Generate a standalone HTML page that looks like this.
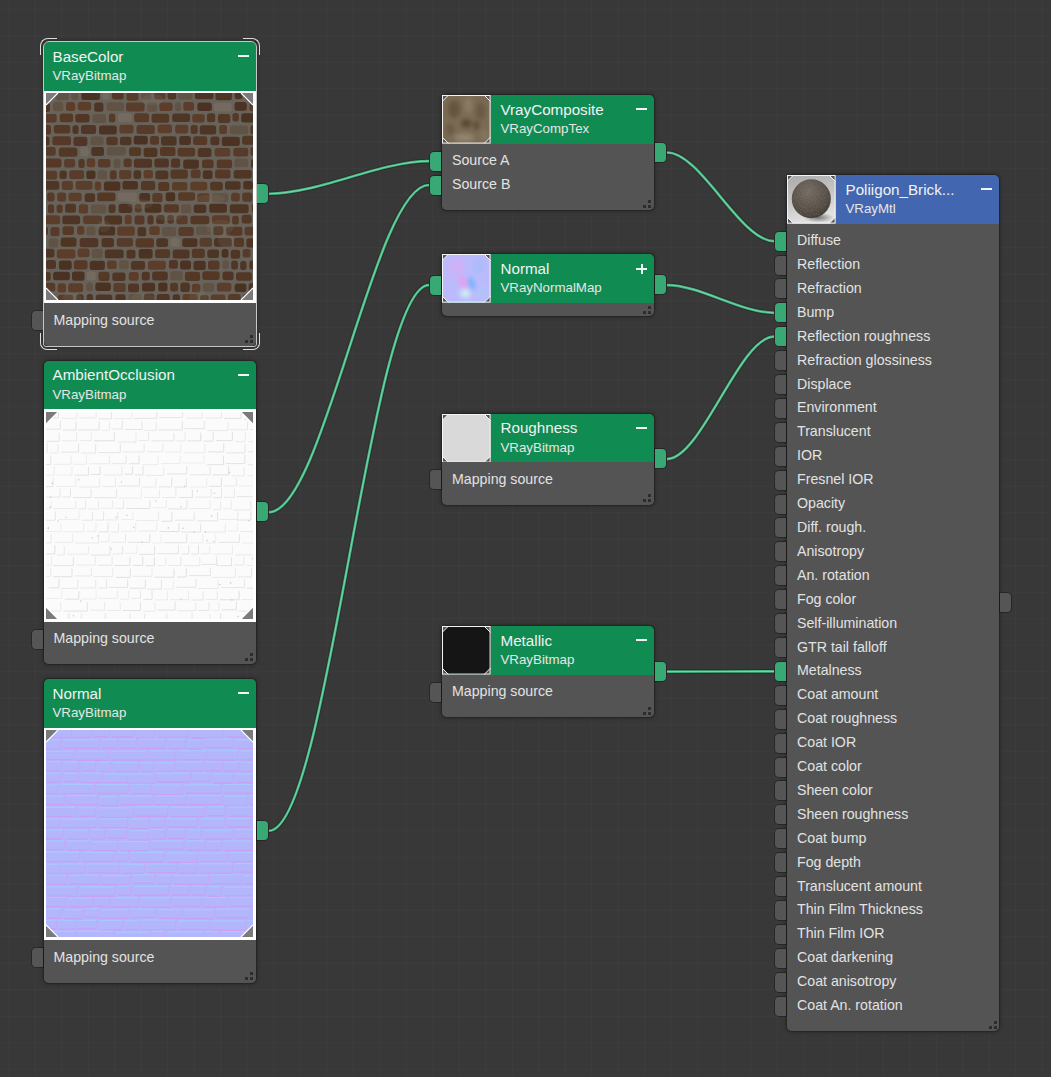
<!DOCTYPE html><html><head><meta charset="utf-8"><style>
*{box-sizing:border-box}
html,body{margin:0;padding:0}
body{width:1051px;height:1077px;overflow:hidden;position:relative;background-color:#383838;
background-image:linear-gradient(90deg,rgba(255,255,255,0.018) 1px,transparent 1px),linear-gradient(0deg,rgba(255,255,255,0.018) 1px,transparent 1px);
background-size:26.5px 26.5px;background-position:8.3px 9.8px;
font-family:"Liberation Sans",sans-serif;}
svg.wires{position:absolute;left:0;top:0}
.node{position:absolute;border-radius:5px 5px 5px 5px;background:#545454;box-shadow:0 0 1px 1px rgba(0,0,0,0.22),0 0 4px 1px rgba(0,0,0,0.28)}
.hdr{position:absolute;left:0;top:0;width:100%;border-radius:5px 5px 0 0}
.body{position:absolute;left:0;width:100%;background:#545454;border-radius:0 0 5px 5px}
.frame{position:absolute;left:0;width:100%;background:#fff}
.img{position:absolute;display:block}
.ttl{position:absolute;font-size:15.2px;line-height:17px;color:#f2f2f2;white-space:nowrap}
.sub{position:absolute;font-size:13.3px;line-height:15px;color:#e6e6e6;white-space:nowrap}
.lbl{position:absolute;font-size:14.2px;line-height:16px;color:#e2e2e2;white-space:nowrap}
.sk{position:absolute;width:11.2px;height:19px;background:#555555;box-shadow:0 0 0 1px rgba(0,0,0,0.3)}
.skl{border-radius:4px 0 0 4px}
.skr{border-radius:0 4px 4px 0}
.sk.on{background:#38a874}
.dot{position:absolute;width:3px;height:3px;border-radius:0.5px;background:#2c2c2c}
.mi{position:absolute;width:11px;height:2px;background:#f4f4f4}
.br{position:absolute;width:17px;height:17px;border:0 solid #dcdcdc}
</style></head><body><svg class="wires" width="1051" height="1077" viewBox="0 0 1051 1077"><path d="M269 193.75C317.7 193.75 380.3 161.1 429 161.1" fill="none" stroke="rgba(0,0,0,0.22)" stroke-width="4.6"/><path d="M269 512.25C323.5 512.25 374.5 185.006 429 185.006" fill="none" stroke="rgba(0,0,0,0.22)" stroke-width="4.6"/><path d="M269 830.75C327.9 830.75 370.1 285.05 429 285.05" fill="none" stroke="rgba(0,0,0,0.22)" stroke-width="4.6"/><path d="M667 152.503C700.9 152.503 740.1 241.1 774 241.1" fill="none" stroke="rgba(0,0,0,0.22)" stroke-width="4.6"/><path d="M667 285.05C699.7 285.05 741.3 312.818 774 312.818" fill="none" stroke="rgba(0,0,0,0.22)" stroke-width="4.6"/><path d="M667 459.05C701.5 459.05 739.5 336.724 774 336.724" fill="none" stroke="rgba(0,0,0,0.22)" stroke-width="4.6"/><path d="M667 671.55C699.1 671.55 741.9 671.408 774 671.408" fill="none" stroke="rgba(0,0,0,0.22)" stroke-width="4.6"/><path d="M269 193.75C317.7 193.75 380.3 161.1 429 161.1" fill="none" stroke="#3fb07c" stroke-width="2.7"/><path d="M269 512.25C323.5 512.25 374.5 185.006 429 185.006" fill="none" stroke="#3fb07c" stroke-width="2.7"/><path d="M269 830.75C327.9 830.75 370.1 285.05 429 285.05" fill="none" stroke="#3fb07c" stroke-width="2.7"/><path d="M667 152.503C700.9 152.503 740.1 241.1 774 241.1" fill="none" stroke="#3fb07c" stroke-width="2.7"/><path d="M667 285.05C699.7 285.05 741.3 312.818 774 312.818" fill="none" stroke="#3fb07c" stroke-width="2.7"/><path d="M667 459.05C701.5 459.05 739.5 336.724 774 336.724" fill="none" stroke="#3fb07c" stroke-width="2.7"/><path d="M667 671.55C699.1 671.55 741.9 671.408 774 671.408" fill="none" stroke="#3fb07c" stroke-width="2.7"/><path d="M269 193.75C317.7 193.75 380.3 161.1 429 161.1" fill="none" stroke="#74d4a6" stroke-width="1.1"/><path d="M269 512.25C323.5 512.25 374.5 185.006 429 185.006" fill="none" stroke="#74d4a6" stroke-width="1.1"/><path d="M269 830.75C327.9 830.75 370.1 285.05 429 285.05" fill="none" stroke="#74d4a6" stroke-width="1.1"/><path d="M667 152.503C700.9 152.503 740.1 241.1 774 241.1" fill="none" stroke="#74d4a6" stroke-width="1.1"/><path d="M667 285.05C699.7 285.05 741.3 312.818 774 312.818" fill="none" stroke="#74d4a6" stroke-width="1.1"/><path d="M667 459.05C701.5 459.05 739.5 336.724 774 336.724" fill="none" stroke="#74d4a6" stroke-width="1.1"/><path d="M667 671.55C699.1 671.55 741.9 671.408 774 671.408" fill="none" stroke="#74d4a6" stroke-width="1.1"/></svg><div class="node" style="left:44px;top:42px;width:212px;height:303.5px"><div class="hdr" style="height:48.5px;background:#108c52"></div><div class="ttl" style="left:8.5px;top:5.600000000000001px">BaseColor</div><div class="sub" style="left:8.5px;top:26.400000000000002px">VRayBitmap</div><div class="frame" style="top:48.5px;height:212.5px"></div><svg class="img" style="left:2px;top:51.0px" width="207" height="207" viewBox="0 0 207 207"><defs><filter id="f_base" x="0" y="0" width="100%" height="100%"><feGaussianBlur stdDeviation="0.55"/></filter></defs><rect width="207" height="207" fill="#68635a"/><g filter="url(#f_base)"><rect x="-5.4" y="-2.0" width="13.3" height="8.6" rx="2.5" fill="#553928"/><rect x="10.1" y="-1.6" width="12.7" height="8.8" rx="2.5" fill="#615345"/><rect x="25.1" y="-1.8" width="7.2" height="8.7" rx="2.5" fill="#615345"/><rect x="35.4" y="-1.9" width="18.5" height="8.8" rx="2.5" fill="#4a3223"/><rect x="56.6" y="-2.3" width="6.8" height="9.1" rx="2.5" fill="#746b5e"/><rect x="66.0" y="-2.0" width="11.7" height="8.6" rx="2.5" fill="#533827"/><rect x="80.5" y="-1.4" width="11.9" height="9.1" rx="2.5" fill="#593c2a"/><rect x="95.3" y="-2.3" width="10.1" height="9.1" rx="2.5" fill="#615345"/><rect x="108.3" y="-2.1" width="11.2" height="8.6" rx="2.5" fill="#593c2a"/><rect x="121.5" y="-2.0" width="8.7" height="8.6" rx="2.5" fill="#513626"/><rect x="132.3" y="-2.3" width="14.2" height="8.7" rx="2.5" fill="#615345"/><rect x="148.9" y="-2.5" width="18.5" height="8.7" rx="2.5" fill="#4b3324"/><rect x="169.5" y="-1.9" width="16.4" height="9.2" rx="2.5" fill="#4d3424"/><rect x="188.7" y="-2.5" width="7.7" height="8.8" rx="2.5" fill="#4d3425"/><rect x="198.8" y="-2.2" width="18.6" height="8.7" rx="2.5" fill="#4d3425"/><rect x="-10.3" y="9.9" width="14.3" height="9.2" rx="2.5" fill="#4e3525"/><rect x="7.0" y="8.8" width="10.3" height="9.1" rx="2.5" fill="#615345"/><rect x="20.0" y="9.1" width="9.2" height="8.8" rx="2.5" fill="#5c3e2b"/><rect x="31.7" y="8.9" width="13.5" height="8.6" rx="2.5" fill="#5b3d2b"/><rect x="48.2" y="9.6" width="9.2" height="9.1" rx="2.5" fill="#4d3425"/><rect x="60.6" y="9.2" width="17.5" height="8.8" rx="2.5" fill="#615345"/><rect x="80.1" y="9.5" width="18.5" height="9.1" rx="2.5" fill="#593c2a"/><rect x="101.3" y="9.6" width="9.8" height="9.2" rx="2.5" fill="#615345"/><rect x="113.4" y="9.4" width="13.3" height="8.6" rx="2.5" fill="#5b3d2b"/><rect x="128.9" y="9.2" width="6.2" height="9.1" rx="2.5" fill="#615345"/><rect x="137.3" y="8.9" width="10.8" height="8.8" rx="2.5" fill="#5a3d2b"/><rect x="151.3" y="9.4" width="14.5" height="8.7" rx="2.5" fill="#4a3223"/><rect x="167.9" y="9.9" width="17.8" height="8.7" rx="2.5" fill="#746b5e"/><rect x="188.5" y="9.1" width="12.3" height="8.7" rx="2.5" fill="#4b3223"/><rect x="203.4" y="9.6" width="15.6" height="8.6" rx="2.5" fill="#583c2a"/><rect x="-4.2" y="21.0" width="14.9" height="8.6" rx="2.5" fill="#583b2a"/><rect x="13.7" y="20.5" width="13.4" height="8.8" rx="2.5" fill="#553928"/><rect x="29.3" y="21.1" width="14.3" height="8.5" rx="2.5" fill="#513626"/><rect x="46.5" y="21.0" width="13.6" height="8.9" rx="2.5" fill="#615345"/><rect x="62.9" y="20.6" width="6.4" height="8.8" rx="2.5" fill="#573a29"/><rect x="71.9" y="20.3" width="14.0" height="8.6" rx="2.5" fill="#746b5e"/><rect x="88.2" y="20.2" width="14.8" height="9.1" rx="2.5" fill="#563a29"/><rect x="105.6" y="20.8" width="17.6" height="9.0" rx="2.5" fill="#523727"/><rect x="126.2" y="20.5" width="17.9" height="8.6" rx="2.5" fill="#4f3526"/><rect x="146.2" y="21.0" width="12.5" height="8.6" rx="2.5" fill="#5b3e2b"/><rect x="161.0" y="20.3" width="8.2" height="8.9" rx="2.5" fill="#513726"/><rect x="171.9" y="21.0" width="12.4" height="9.0" rx="2.5" fill="#523727"/><rect x="186.4" y="20.0" width="6.4" height="8.6" rx="2.5" fill="#543928"/><rect x="195.2" y="20.2" width="16.3" height="9.3" rx="2.5" fill="#4a3223"/><rect x="-2.8" y="32.1" width="7.8" height="9.3" rx="2.5" fill="#553928"/><rect x="7.8" y="32.1" width="16.5" height="8.5" rx="2.5" fill="#523727"/><rect x="26.5" y="32.2" width="6.1" height="8.9" rx="2.5" fill="#4f3525"/><rect x="35.0" y="32.0" width="15.1" height="8.9" rx="2.5" fill="#513626"/><rect x="53.0" y="32.4" width="17.8" height="9.2" rx="2.5" fill="#4c3324"/><rect x="73.4" y="31.8" width="14.1" height="8.6" rx="2.5" fill="#5a3d2b"/><rect x="90.5" y="32.1" width="18.3" height="8.9" rx="2.5" fill="#573b29"/><rect x="111.7" y="31.6" width="14.3" height="8.7" rx="2.5" fill="#5c3e2c"/><rect x="129.2" y="31.7" width="13.0" height="8.7" rx="2.5" fill="#5a3c2a"/><rect x="144.6" y="32.0" width="7.1" height="8.9" rx="2.5" fill="#533827"/><rect x="153.7" y="32.3" width="16.5" height="9.2" rx="2.5" fill="#503626"/><rect x="173.2" y="31.9" width="7.8" height="9.2" rx="2.5" fill="#593c2a"/><rect x="183.9" y="32.4" width="18.3" height="8.9" rx="2.5" fill="#615345"/><rect x="204.4" y="32.2" width="12.8" height="9.1" rx="2.5" fill="#533827"/><rect x="-6.7" y="43.6" width="10.1" height="9.0" rx="2.5" fill="#4d3425"/><rect x="6.4" y="43.3" width="18.6" height="8.9" rx="2.5" fill="#543828"/><rect x="27.5" y="43.8" width="13.9" height="9.3" rx="2.5" fill="#513626"/><rect x="44.4" y="43.4" width="13.3" height="8.9" rx="2.5" fill="#615345"/><rect x="60.3" y="43.7" width="11.4" height="8.5" rx="2.5" fill="#523727"/><rect x="73.9" y="43.7" width="11.6" height="8.6" rx="2.5" fill="#4f3526"/><rect x="87.7" y="42.8" width="14.0" height="8.6" rx="2.5" fill="#4a3223"/><rect x="104.0" y="43.0" width="9.0" height="8.8" rx="2.5" fill="#553928"/><rect x="115.1" y="43.2" width="15.5" height="9.2" rx="2.5" fill="#4d3425"/><rect x="133.2" y="43.1" width="11.7" height="9.0" rx="2.5" fill="#4c3324"/><rect x="147.1" y="43.2" width="14.2" height="8.8" rx="2.5" fill="#553928"/><rect x="164.4" y="43.6" width="9.0" height="8.7" rx="2.5" fill="#4f3526"/><rect x="175.8" y="43.8" width="18.0" height="9.1" rx="2.5" fill="#4c3324"/><rect x="196.1" y="42.7" width="15.4" height="9.1" rx="2.5" fill="#513727"/><rect x="-1.5" y="53.9" width="11.2" height="8.8" rx="2.5" fill="#563a29"/><rect x="12.8" y="54.5" width="18.6" height="9.2" rx="2.5" fill="#533827"/><rect x="34.2" y="54.0" width="8.5" height="9.2" rx="2.5" fill="#746b5e"/><rect x="45.3" y="54.1" width="12.7" height="8.8" rx="2.5" fill="#4d3425"/><rect x="61.0" y="54.0" width="18.9" height="8.6" rx="2.5" fill="#615345"/><rect x="83.1" y="54.3" width="12.0" height="8.7" rx="2.5" fill="#533827"/><rect x="97.6" y="54.7" width="13.8" height="9.3" rx="2.5" fill="#4d3424"/><rect x="113.9" y="54.1" width="15.6" height="9.0" rx="2.5" fill="#533827"/><rect x="131.6" y="54.7" width="17.6" height="8.7" rx="2.5" fill="#553928"/><rect x="151.7" y="55.1" width="13.8" height="8.9" rx="2.5" fill="#4e3525"/><rect x="168.6" y="54.9" width="15.7" height="8.7" rx="2.5" fill="#5a3d2b"/><rect x="187.3" y="54.8" width="15.0" height="8.7" rx="2.5" fill="#573b29"/><rect x="204.4" y="53.9" width="10.4" height="8.9" rx="2.5" fill="#563a29"/><rect x="-2.8" y="65.6" width="18.3" height="8.8" rx="2.5" fill="#543928"/><rect x="18.1" y="66.0" width="11.1" height="8.5" rx="2.5" fill="#583b2a"/><rect x="32.4" y="66.1" width="6.3" height="8.8" rx="2.5" fill="#513726"/><rect x="40.7" y="65.3" width="8.5" height="9.0" rx="2.5" fill="#5b3d2b"/><rect x="51.9" y="65.9" width="12.6" height="8.5" rx="2.5" fill="#563a29"/><rect x="67.5" y="66.1" width="7.0" height="8.8" rx="2.5" fill="#615345"/><rect x="77.6" y="65.4" width="8.1" height="8.9" rx="2.5" fill="#553928"/><rect x="87.8" y="65.8" width="18.3" height="9.0" rx="2.5" fill="#503626"/><rect x="108.4" y="65.5" width="14.5" height="8.9" rx="2.5" fill="#4f3525"/><rect x="124.9" y="65.4" width="9.2" height="9.3" rx="2.5" fill="#513626"/><rect x="137.2" y="66.4" width="15.7" height="9.3" rx="2.5" fill="#4b3223"/><rect x="156.0" y="66.4" width="11.6" height="8.9" rx="2.5" fill="#533827"/><rect x="170.7" y="66.4" width="15.4" height="8.9" rx="2.5" fill="#553928"/><rect x="188.2" y="65.4" width="14.1" height="8.9" rx="2.5" fill="#615345"/><rect x="205.0" y="66.0" width="7.6" height="8.9" rx="2.5" fill="#4e3525"/><rect x="-5.0" y="77.7" width="16.1" height="8.9" rx="2.5" fill="#573b29"/><rect x="13.4" y="77.4" width="7.5" height="8.6" rx="2.5" fill="#503626"/><rect x="23.2" y="77.2" width="14.9" height="8.8" rx="2.5" fill="#583b2a"/><rect x="40.3" y="77.6" width="9.2" height="8.5" rx="2.5" fill="#4a3223"/><rect x="51.6" y="77.2" width="9.5" height="9.0" rx="2.5" fill="#615345"/><rect x="63.8" y="77.3" width="6.9" height="9.2" rx="2.5" fill="#553928"/><rect x="73.2" y="76.9" width="12.2" height="9.1" rx="2.5" fill="#593c2a"/><rect x="87.5" y="77.2" width="7.6" height="8.7" rx="2.5" fill="#4d3425"/><rect x="97.6" y="76.9" width="9.4" height="8.7" rx="2.5" fill="#5c3e2c"/><rect x="109.3" y="77.6" width="13.1" height="8.7" rx="2.5" fill="#503626"/><rect x="124.5" y="76.6" width="17.4" height="9.2" rx="2.5" fill="#533827"/><rect x="144.7" y="76.6" width="9.9" height="8.7" rx="2.5" fill="#563a29"/><rect x="156.7" y="77.3" width="9.9" height="8.7" rx="2.5" fill="#4c3324"/><rect x="169.1" y="76.6" width="15.4" height="9.0" rx="2.5" fill="#543928"/><rect x="187.6" y="77.0" width="18.2" height="8.6" rx="2.5" fill="#4f3526"/><rect x="-4.8" y="88.1" width="18.2" height="8.6" rx="2.5" fill="#503626"/><rect x="15.8" y="88.0" width="11.1" height="9.0" rx="2.5" fill="#593c2a"/><rect x="29.6" y="88.0" width="16.9" height="8.8" rx="2.5" fill="#5a3d2b"/><rect x="48.8" y="88.5" width="6.3" height="8.9" rx="2.5" fill="#5c3e2b"/><rect x="57.9" y="88.5" width="16.5" height="9.2" rx="2.5" fill="#4b3224"/><rect x="76.4" y="87.9" width="15.6" height="8.6" rx="2.5" fill="#4c3324"/><rect x="94.9" y="88.1" width="14.4" height="9.1" rx="2.5" fill="#533827"/><rect x="112.2" y="89.0" width="11.1" height="9.0" rx="2.5" fill="#533827"/><rect x="126.0" y="88.9" width="15.4" height="8.7" rx="2.5" fill="#593c2a"/><rect x="144.2" y="88.8" width="17.1" height="8.7" rx="2.5" fill="#5c3e2b"/><rect x="164.1" y="88.8" width="12.8" height="8.7" rx="2.5" fill="#513727"/><rect x="179.0" y="88.3" width="15.6" height="8.5" rx="2.5" fill="#4d3425"/><rect x="197.2" y="87.9" width="9.8" height="8.5" rx="2.5" fill="#4c3324"/><rect x="-9.3" y="99.7" width="8.3" height="9.3" rx="2.5" fill="#5b3d2b"/><rect x="1.1" y="99.4" width="7.4" height="9.2" rx="2.5" fill="#573b29"/><rect x="11.2" y="99.4" width="8.9" height="9.2" rx="2.5" fill="#583b2a"/><rect x="22.5" y="99.7" width="13.1" height="8.6" rx="2.5" fill="#5a3d2b"/><rect x="38.7" y="100.2" width="10.4" height="8.9" rx="2.5" fill="#4e3425"/><rect x="51.2" y="99.6" width="18.3" height="8.7" rx="2.5" fill="#533827"/><rect x="71.9" y="99.4" width="18.9" height="8.8" rx="2.5" fill="#746b5e"/><rect x="93.3" y="100.0" width="10.8" height="8.7" rx="2.5" fill="#4c3324"/><rect x="106.3" y="100.1" width="10.2" height="9.1" rx="2.5" fill="#563a29"/><rect x="119.7" y="99.3" width="9.5" height="8.9" rx="2.5" fill="#493123"/><rect x="132.1" y="99.2" width="17.0" height="8.6" rx="2.5" fill="#573b29"/><rect x="151.3" y="100.2" width="12.2" height="8.9" rx="2.5" fill="#5a3c2a"/><rect x="165.9" y="100.2" width="16.3" height="9.0" rx="2.5" fill="#615345"/><rect x="185.1" y="99.7" width="8.7" height="8.9" rx="2.5" fill="#593c2a"/><rect x="196.2" y="99.5" width="10.0" height="9.2" rx="2.5" fill="#573b29"/><rect x="-8.2" y="111.0" width="7.4" height="9.0" rx="2.5" fill="#593c2a"/><rect x="1.9" y="111.3" width="6.2" height="9.0" rx="2.5" fill="#543928"/><rect x="10.6" y="111.4" width="6.1" height="8.5" rx="2.5" fill="#553928"/><rect x="19.1" y="110.8" width="10.9" height="8.9" rx="2.5" fill="#513626"/><rect x="32.8" y="111.3" width="9.3" height="9.1" rx="2.5" fill="#5b3d2b"/><rect x="44.8" y="111.4" width="15.4" height="9.0" rx="2.5" fill="#615345"/><rect x="62.4" y="111.2" width="7.2" height="8.8" rx="2.5" fill="#513726"/><rect x="72.6" y="110.7" width="13.7" height="9.2" rx="2.5" fill="#4c3324"/><rect x="88.8" y="110.9" width="6.9" height="8.6" rx="2.5" fill="#563a29"/><rect x="98.7" y="110.8" width="16.7" height="9.0" rx="2.5" fill="#4a3223"/><rect x="117.8" y="111.3" width="15.1" height="8.5" rx="2.5" fill="#553928"/><rect x="135.0" y="111.2" width="10.3" height="9.0" rx="2.5" fill="#615345"/><rect x="147.7" y="111.4" width="12.6" height="8.7" rx="2.5" fill="#4c3324"/><rect x="163.2" y="110.8" width="17.7" height="8.9" rx="2.5" fill="#4c3324"/><rect x="183.8" y="111.3" width="18.8" height="8.9" rx="2.5" fill="#4d3425"/><rect x="205.8" y="110.5" width="14.2" height="9.1" rx="2.5" fill="#543928"/><rect x="-4.0" y="122.3" width="18.1" height="9.0" rx="2.5" fill="#5c3e2c"/><rect x="16.3" y="122.4" width="17.8" height="8.9" rx="2.5" fill="#4e3525"/><rect x="37.1" y="122.4" width="18.9" height="8.6" rx="2.5" fill="#593c2a"/><rect x="58.4" y="122.4" width="17.7" height="9.1" rx="2.5" fill="#4d3424"/><rect x="78.7" y="121.9" width="7.0" height="9.3" rx="2.5" fill="#5b3d2b"/><rect x="88.5" y="122.6" width="10.0" height="8.8" rx="2.5" fill="#553928"/><rect x="101.4" y="122.3" width="6.2" height="9.1" rx="2.5" fill="#513626"/><rect x="110.3" y="122.0" width="8.3" height="8.9" rx="2.5" fill="#503626"/><rect x="121.4" y="121.9" width="6.5" height="8.8" rx="2.5" fill="#553928"/><rect x="130.4" y="122.5" width="11.3" height="8.8" rx="2.5" fill="#583b2a"/><rect x="144.4" y="122.7" width="18.9" height="8.6" rx="2.5" fill="#523727"/><rect x="166.0" y="122.3" width="17.8" height="8.9" rx="2.5" fill="#5b3d2b"/><rect x="186.1" y="122.8" width="6.7" height="8.7" rx="2.5" fill="#553928"/><rect x="195.7" y="121.8" width="10.0" height="8.8" rx="2.5" fill="#523727"/><rect x="-4.8" y="133.6" width="6.7" height="8.7" rx="2.5" fill="#4f3526"/><rect x="4.4" y="134.1" width="9.1" height="9.2" rx="2.5" fill="#563a29"/><rect x="16.5" y="133.3" width="11.5" height="8.7" rx="2.5" fill="#543928"/><rect x="31.1" y="133.1" width="7.3" height="8.7" rx="2.5" fill="#5b3e2b"/><rect x="40.3" y="133.4" width="9.2" height="9.1" rx="2.5" fill="#615345"/><rect x="52.6" y="133.4" width="16.6" height="9.0" rx="2.5" fill="#4a3223"/><rect x="71.2" y="133.6" width="17.7" height="9.1" rx="2.5" fill="#5c3e2c"/><rect x="91.5" y="134.1" width="8.7" height="9.1" rx="2.5" fill="#4d3425"/><rect x="103.2" y="133.2" width="10.6" height="8.9" rx="2.5" fill="#5c3e2c"/><rect x="116.0" y="134.1" width="14.2" height="9.1" rx="2.5" fill="#615345"/><rect x="132.4" y="134.1" width="15.4" height="9.0" rx="2.5" fill="#573a29"/><rect x="150.0" y="133.5" width="15.0" height="8.5" rx="2.5" fill="#615345"/><rect x="167.3" y="133.2" width="10.0" height="8.7" rx="2.5" fill="#4e3425"/><rect x="180.1" y="133.8" width="16.3" height="9.0" rx="2.5" fill="#553928"/><rect x="198.6" y="133.8" width="9.9" height="8.6" rx="2.5" fill="#563a29"/><rect x="-11.8" y="144.9" width="11.7" height="8.9" rx="2.5" fill="#615345"/><rect x="2.6" y="145.3" width="9.7" height="9.1" rx="2.5" fill="#615345"/><rect x="14.7" y="144.6" width="15.8" height="9.1" rx="2.5" fill="#4d3424"/><rect x="33.6" y="144.9" width="18.8" height="9.3" rx="2.5" fill="#513626"/><rect x="55.5" y="145.0" width="12.5" height="9.2" rx="2.5" fill="#503626"/><rect x="70.8" y="144.9" width="16.2" height="8.9" rx="2.5" fill="#563a29"/><rect x="89.6" y="145.2" width="18.4" height="9.2" rx="2.5" fill="#553928"/><rect x="110.3" y="145.2" width="11.7" height="8.7" rx="2.5" fill="#4e3425"/><rect x="124.6" y="144.9" width="8.9" height="8.8" rx="2.5" fill="#746b5e"/><rect x="136.2" y="145.3" width="15.3" height="8.8" rx="2.5" fill="#4c3324"/><rect x="153.5" y="144.8" width="12.4" height="9.0" rx="2.5" fill="#593c2a"/><rect x="168.0" y="145.0" width="17.8" height="8.8" rx="2.5" fill="#4e3425"/><rect x="188.0" y="144.7" width="10.0" height="9.3" rx="2.5" fill="#533827"/><rect x="200.4" y="145.3" width="13.7" height="9.2" rx="2.5" fill="#4e3525"/><rect x="-8.3" y="155.7" width="16.8" height="8.7" rx="2.5" fill="#503626"/><rect x="10.8" y="156.2" width="18.6" height="9.3" rx="2.5" fill="#5c3e2c"/><rect x="31.6" y="155.6" width="11.9" height="8.7" rx="2.5" fill="#5a3d2b"/><rect x="45.7" y="156.1" width="11.1" height="9.1" rx="2.5" fill="#615345"/><rect x="58.8" y="156.5" width="18.9" height="8.7" rx="2.5" fill="#4e3525"/><rect x="80.4" y="156.7" width="9.1" height="8.9" rx="2.5" fill="#503626"/><rect x="92.7" y="156.1" width="13.9" height="9.3" rx="2.5" fill="#4b3223"/><rect x="109.1" y="156.3" width="15.0" height="8.6" rx="2.5" fill="#523727"/><rect x="126.6" y="156.5" width="17.0" height="9.0" rx="2.5" fill="#503626"/><rect x="145.8" y="155.8" width="13.1" height="9.2" rx="2.5" fill="#523727"/><rect x="161.3" y="156.4" width="11.8" height="8.5" rx="2.5" fill="#4d3425"/><rect x="175.6" y="156.0" width="6.9" height="8.7" rx="2.5" fill="#4a3223"/><rect x="184.7" y="156.7" width="9.4" height="9.0" rx="2.5" fill="#4f3525"/><rect x="196.6" y="156.0" width="8.0" height="8.6" rx="2.5" fill="#573b29"/><rect x="-0.2" y="167.0" width="10.2" height="9.0" rx="2.5" fill="#503626"/><rect x="12.9" y="167.4" width="12.8" height="9.3" rx="2.5" fill="#4a3223"/><rect x="27.8" y="167.3" width="13.7" height="9.3" rx="2.5" fill="#543828"/><rect x="43.7" y="167.8" width="15.2" height="9.1" rx="2.5" fill="#4c3324"/><rect x="61.1" y="167.4" width="9.6" height="8.7" rx="2.5" fill="#5a3c2b"/><rect x="73.0" y="167.2" width="9.8" height="9.0" rx="2.5" fill="#615345"/><rect x="84.9" y="167.9" width="14.2" height="8.8" rx="2.5" fill="#4f3525"/><rect x="101.9" y="167.7" width="17.9" height="9.1" rx="2.5" fill="#5c3e2b"/><rect x="122.9" y="167.0" width="9.0" height="8.8" rx="2.5" fill="#513626"/><rect x="134.0" y="167.5" width="11.0" height="9.0" rx="2.5" fill="#4c3324"/><rect x="147.5" y="167.7" width="12.2" height="9.2" rx="2.5" fill="#4b3324"/><rect x="162.0" y="167.6" width="11.5" height="9.2" rx="2.5" fill="#543828"/><rect x="176.4" y="167.3" width="6.3" height="9.0" rx="2.5" fill="#615345"/><rect x="185.2" y="167.6" width="6.7" height="8.9" rx="2.5" fill="#503626"/><rect x="194.2" y="168.0" width="6.3" height="9.0" rx="2.5" fill="#4e3525"/><rect x="203.3" y="167.6" width="8.4" height="8.9" rx="2.5" fill="#503626"/><rect x="-11.3" y="178.9" width="16.0" height="8.8" rx="2.5" fill="#513727"/><rect x="7.1" y="178.7" width="16.8" height="8.6" rx="2.5" fill="#4a3223"/><rect x="26.0" y="178.6" width="12.6" height="9.1" rx="2.5" fill="#4c3324"/><rect x="40.8" y="178.5" width="9.0" height="8.8" rx="2.5" fill="#746b5e"/><rect x="52.4" y="178.8" width="11.1" height="9.1" rx="2.5" fill="#543828"/><rect x="66.3" y="179.4" width="13.3" height="8.6" rx="2.5" fill="#503626"/><rect x="82.7" y="179.0" width="10.1" height="8.7" rx="2.5" fill="#5c3e2b"/><rect x="95.7" y="178.8" width="8.1" height="8.8" rx="2.5" fill="#503626"/><rect x="106.1" y="178.5" width="15.7" height="8.9" rx="2.5" fill="#503626"/><rect x="124.1" y="178.3" width="12.7" height="9.2" rx="2.5" fill="#615345"/><rect x="138.9" y="178.7" width="15.2" height="9.2" rx="2.5" fill="#533827"/><rect x="156.3" y="178.3" width="17.3" height="8.6" rx="2.5" fill="#533827"/><rect x="176.5" y="178.5" width="11.1" height="8.7" rx="2.5" fill="#503626"/><rect x="190.0" y="179.2" width="15.9" height="8.6" rx="2.5" fill="#513727"/><rect x="-7.5" y="189.7" width="16.8" height="8.7" rx="2.5" fill="#563a29"/><rect x="11.6" y="190.2" width="8.4" height="9.3" rx="2.5" fill="#5c3e2c"/><rect x="22.2" y="190.3" width="14.9" height="9.0" rx="2.5" fill="#5b3d2b"/><rect x="40.3" y="189.6" width="6.6" height="8.7" rx="2.5" fill="#615345"/><rect x="49.3" y="189.6" width="15.5" height="8.5" rx="2.5" fill="#4a3223"/><rect x="67.4" y="189.9" width="12.3" height="9.0" rx="2.5" fill="#593c2a"/><rect x="82.0" y="190.4" width="11.1" height="8.8" rx="2.5" fill="#513626"/><rect x="96.0" y="189.7" width="13.1" height="8.7" rx="2.5" fill="#4b3324"/><rect x="112.2" y="189.6" width="9.3" height="8.9" rx="2.5" fill="#4a3223"/><rect x="124.1" y="189.8" width="7.9" height="8.8" rx="2.5" fill="#533827"/><rect x="134.4" y="189.6" width="9.4" height="9.3" rx="2.5" fill="#4f3526"/><rect x="145.9" y="190.7" width="8.4" height="8.9" rx="2.5" fill="#5a3c2b"/><rect x="156.9" y="190.0" width="11.4" height="8.7" rx="2.5" fill="#615345"/><rect x="170.9" y="189.8" width="14.5" height="8.8" rx="2.5" fill="#5a3c2b"/><rect x="188.6" y="190.4" width="11.8" height="8.6" rx="2.5" fill="#4a3223"/><rect x="202.6" y="189.9" width="7.5" height="9.2" rx="2.5" fill="#4f3526"/><rect x="-0.1" y="200.8" width="8.7" height="8.5" rx="2.5" fill="#593c2a"/><rect x="11.6" y="201.8" width="15.6" height="9.0" rx="2.5" fill="#583b2a"/><rect x="30.3" y="201.3" width="7.3" height="8.5" rx="2.5" fill="#4e3525"/><rect x="40.7" y="201.1" width="6.3" height="8.8" rx="2.5" fill="#503626"/><rect x="49.8" y="201.6" width="16.5" height="9.0" rx="2.5" fill="#4f3525"/><rect x="69.4" y="201.2" width="10.2" height="9.2" rx="2.5" fill="#4d3425"/><rect x="82.5" y="201.0" width="13.1" height="8.8" rx="2.5" fill="#615345"/><rect x="97.8" y="200.8" width="10.6" height="9.0" rx="2.5" fill="#513726"/><rect x="110.7" y="201.0" width="13.0" height="8.5" rx="2.5" fill="#503526"/><rect x="126.6" y="201.3" width="7.4" height="8.5" rx="2.5" fill="#4e3425"/><rect x="136.5" y="201.1" width="15.2" height="9.2" rx="2.5" fill="#5b3d2b"/><rect x="154.1" y="202.0" width="8.4" height="9.0" rx="2.5" fill="#553928"/><rect x="164.9" y="201.5" width="14.4" height="9.1" rx="2.5" fill="#5a3c2a"/><rect x="182.0" y="200.9" width="12.6" height="8.8" rx="2.5" fill="#573a29"/><rect x="197.1" y="201.3" width="14.7" height="9.0" rx="2.5" fill="#553928"/><ellipse cx="106.7" cy="6.7" rx="11.0" ry="5.8" fill="#8a8476" opacity="0.15"/><ellipse cx="122.8" cy="123.1" rx="13.5" ry="4.6" fill="#8a8476" opacity="0.15"/><ellipse cx="97.0" cy="205.5" rx="11.9" ry="5.3" fill="#8a8476" opacity="0.15"/><ellipse cx="152.5" cy="204.8" rx="9.2" ry="7.5" fill="#8a8476" opacity="0.15"/><ellipse cx="26.2" cy="204.9" rx="9.9" ry="4.9" fill="#8a8476" opacity="0.15"/><ellipse cx="173.9" cy="134.4" rx="13.5" ry="7.3" fill="#8a8476" opacity="0.15"/><ellipse cx="165.1" cy="105.9" rx="13.9" ry="4.3" fill="#8a8476" opacity="0.15"/><ellipse cx="180.1" cy="147.3" rx="8.0" ry="7.2" fill="#8a8476" opacity="0.15"/><ellipse cx="94.0" cy="111.0" rx="12.9" ry="4.8" fill="#8a8476" opacity="0.15"/><ellipse cx="57.9" cy="133.2" rx="6.6" ry="6.2" fill="#8a8476" opacity="0.15"/></g><path d="M0 0H12L0 12Z" fill="#7a7a7a"/><path d="M207 0H195L207 12Z" fill="#7a7a7a"/><path d="M0 207H12L0 195Z" fill="#7a7a7a"/><path d="M207 207H195L207 195Z" fill="#7a7a7a"/><path d="M12 0L0 12M195 0L207 12M0 195L12 207M207 195L195 207" stroke="#fff" stroke-width="1.2"/></svg><div class="body" style="top:261.0px;height:42.5px"></div><div class="lbl" style="left:9.5px;top:269.5px">Mapping source</div></div><div class="mi" style="left:238px;top:55px"></div><div class="dot" style="left:250px;top:335px"></div><div class="dot" style="left:245px;top:340px"></div><div class="dot" style="left:250px;top:340px"></div><div class="sk skl" style="left:32px;top:311.0px"></div><div class="sk skr on" style="left:257px;top:183.95px"></div><div class="node" style="left:44px;top:360.5px;width:212px;height:303.5px"><div class="hdr" style="height:48.5px;background:#108c52"></div><div class="ttl" style="left:8.5px;top:5.600000000000001px">AmbientOcclusion</div><div class="sub" style="left:8.5px;top:26.400000000000002px">VRayBitmap</div><div class="frame" style="top:48.5px;height:212.5px"></div><svg class="img" style="left:2px;top:51.0px" width="207" height="207" viewBox="0 0 207 207"><defs><filter id="f_ao" x="0" y="0" width="100%" height="100%"><feGaussianBlur stdDeviation="0.45"/></filter></defs><rect width="207" height="207" fill="#fbfbfb"/><g filter="url(#f_ao)"><path d="M-5.7 5.9h18.2v-8.3" fill="none" stroke="#dedede" stroke-width="0.9"/><path d="M15.7 6.3h15.2v-8.3" fill="none" stroke="#ebebeb" stroke-width="0.9"/><path d="M33.6 5.9h16.5v-8.3" fill="none" stroke="#e5e5e5" stroke-width="0.9"/><path d="M52.5 6.9h12.8v-8.8" fill="none" stroke="#e1e1e1" stroke-width="0.9"/><path d="M67.4 6.6h18.7v-8.7" fill="none" stroke="#ebebeb" stroke-width="0.9"/><path d="M88.2 6.3h22.6v-8.1" fill="none" stroke="#e1e1e1" stroke-width="0.9"/><path d="M112.9 5.5h23.8v-8.0" fill="none" stroke="#e4e4e4" stroke-width="0.9"/><path d="M139.9 6.1h16.2v-8.0" fill="none" stroke="#e9e9e9" stroke-width="0.9"/><path d="M159.1 6.0h16.4v-8.5" fill="none" stroke="#e7e7e7" stroke-width="0.9"/><path d="M178.0 6.4h17.1v-8.5" fill="none" stroke="#dedede" stroke-width="0.9"/><path d="M197.9 7.2h8.4v-8.9" fill="none" stroke="#e2e2e2" stroke-width="0.9"/><path d="M-4.4 17.1h18.7v-8.3" fill="none" stroke="#e1e1e1" stroke-width="0.9"/><path d="M16.8 18.0h13.3v-8.4" fill="none" stroke="#e0e0e0" stroke-width="0.9"/><path d="M32.1 17.9h21.0v-8.6" fill="none" stroke="#e1e1e1" stroke-width="0.9"/><path d="M55.9 18.3h7.7v-8.9" fill="none" stroke="#eaeaea" stroke-width="0.9"/><path d="M66.3 17.0h10.0v-8.3" fill="none" stroke="#e2e2e2" stroke-width="0.9"/><path d="M78.9 17.5h17.2v-8.2" fill="none" stroke="#e3e3e3" stroke-width="0.9"/><path d="M98.4 18.4h11.8v-8.5" fill="none" stroke="#e5e5e5" stroke-width="0.9"/><path d="M112.5 17.9h23.8v-8.5" fill="none" stroke="#e0e0e0" stroke-width="0.9"/><path d="M138.5 16.7h19.7v-8.0" fill="none" stroke="#e2e2e2" stroke-width="0.9"/><path d="M161.4 18.5h20.6v-8.9" fill="none" stroke="#e6e6e6" stroke-width="0.9"/><path d="M184.0 17.8h17.5v-7.9" fill="none" stroke="#e6e6e6" stroke-width="0.9"/><path d="M203.7 17.5h22.8v-8.0" fill="none" stroke="#e2e2e2" stroke-width="0.9"/><path d="M-2.8 29.3h16.0v-8.5" fill="none" stroke="#e2e2e2" stroke-width="0.9"/><path d="M16.0 28.8h14.6v-8.2" fill="none" stroke="#e7e7e7" stroke-width="0.9"/><path d="M33.6 28.6h11.7v-8.0" fill="none" stroke="#e9e9e9" stroke-width="0.9"/><path d="M47.9 28.8h20.5v-8.2" fill="none" stroke="#dedede" stroke-width="0.9"/><path d="M71.2 30.0h18.8v-8.9" fill="none" stroke="#e4e4e4" stroke-width="0.9"/><path d="M92.2 28.6h10.4v-8.5" fill="none" stroke="#e7e7e7" stroke-width="0.9"/><path d="M105.3 28.9h22.6v-7.9" fill="none" stroke="#e4e4e4" stroke-width="0.9"/><path d="M130.5 28.9h8.6v-8.6" fill="none" stroke="#e6e6e6" stroke-width="0.9"/><path d="M141.5 28.9h13.3v-8.2" fill="none" stroke="#dedede" stroke-width="0.9"/><path d="M157.6 29.1h9.6v-9.1" fill="none" stroke="#dfdfdf" stroke-width="0.9"/><path d="M170.3 28.6h16.1v-8.2" fill="none" stroke="#dfdfdf" stroke-width="0.9"/><path d="M189.2 29.7h10.2v-8.8" fill="none" stroke="#e8e8e8" stroke-width="0.9"/><path d="M202.1 29.6h17.6v-9.0" fill="none" stroke="#e9e9e9" stroke-width="0.9"/><path d="M-7.0 40.1h8.2v-8.7" fill="none" stroke="#e3e3e3" stroke-width="0.9"/><path d="M3.4 40.9h8.5v-8.7" fill="none" stroke="#eaeaea" stroke-width="0.9"/><path d="M14.8 40.1h17.8v-8.6" fill="none" stroke="#e1e1e1" stroke-width="0.9"/><path d="M35.2 41.0h14.5v-8.9" fill="none" stroke="#e3e3e3" stroke-width="0.9"/><path d="M52.3 40.6h22.0v-9.0" fill="none" stroke="#e3e3e3" stroke-width="0.9"/><path d="M76.8 39.9h21.4v-8.3" fill="none" stroke="#e6e6e6" stroke-width="0.9"/><path d="M101.3 39.8h15.5v-8.3" fill="none" stroke="#e5e5e5" stroke-width="0.9"/><path d="M119.3 40.1h15.5v-8.3" fill="none" stroke="#eaeaea" stroke-width="0.9"/><path d="M137.8 40.8h21.1v-8.8" fill="none" stroke="#eaeaea" stroke-width="0.9"/><path d="M161.9 39.9h15.9v-8.6" fill="none" stroke="#dfdfdf" stroke-width="0.9"/><path d="M180.4 40.9h18.6v-8.7" fill="none" stroke="#e3e3e3" stroke-width="0.9"/><path d="M201.9 39.8h22.2v-8.3" fill="none" stroke="#e5e5e5" stroke-width="0.9"/><path d="M-6.5 52.6h11.3v-9.0" fill="none" stroke="#e2e2e2" stroke-width="0.9"/><path d="M7.2 52.3h17.7v-8.8" fill="none" stroke="#eaeaea" stroke-width="0.9"/><path d="M28.0 52.3h12.5v-8.9" fill="none" stroke="#ebebeb" stroke-width="0.9"/><path d="M43.2 51.8h20.5v-8.6" fill="none" stroke="#e8e8e8" stroke-width="0.9"/><path d="M66.1 51.7h13.9v-8.6" fill="none" stroke="#e4e4e4" stroke-width="0.9"/><path d="M83.0 51.8h10.1v-8.2" fill="none" stroke="#dfdfdf" stroke-width="0.9"/><path d="M96.2 52.6h15.9v-9.0" fill="none" stroke="#ebebeb" stroke-width="0.9"/><path d="M115.0 51.6h19.2v-7.9" fill="none" stroke="#eaeaea" stroke-width="0.9"/><path d="M136.3 51.0h21.7v-8.1" fill="none" stroke="#ececec" stroke-width="0.9"/><path d="M161.1 52.6h16.4v-9.0" fill="none" stroke="#e1e1e1" stroke-width="0.9"/><path d="M179.7 51.6h19.2v-8.7" fill="none" stroke="#e0e0e0" stroke-width="0.9"/><path d="M201.8 52.8h16.3v-9.1" fill="none" stroke="#e3e3e3" stroke-width="0.9"/><path d="M-6.4 63.1h14.6v-8.5" fill="none" stroke="#eaeaea" stroke-width="0.9"/><path d="M10.7 63.1h15.3v-8.7" fill="none" stroke="#ebebeb" stroke-width="0.9"/><path d="M28.4 63.2h14.1v-8.5" fill="none" stroke="#e2e2e2" stroke-width="0.9"/><path d="M44.5 62.5h9.6v-8.2" fill="none" stroke="#dfdfdf" stroke-width="0.9"/><path d="M57.3 63.0h18.6v-8.6" fill="none" stroke="#e7e7e7" stroke-width="0.9"/><path d="M78.3 62.3h8.2v-8.0" fill="none" stroke="#e1e1e1" stroke-width="0.9"/><path d="M88.7 62.9h8.4v-9.0" fill="none" stroke="#e1e1e1" stroke-width="0.9"/><path d="M99.1 63.4h18.7v-8.4" fill="none" stroke="#e9e9e9" stroke-width="0.9"/><path d="M121.0 61.9h19.7v-8.0" fill="none" stroke="#e1e1e1" stroke-width="0.9"/><path d="M143.4 62.8h20.7v-8.3" fill="none" stroke="#e3e3e3" stroke-width="0.9"/><path d="M166.5 62.9h16.2v-8.7" fill="none" stroke="#dfdfdf" stroke-width="0.9"/><path d="M185.5 63.9h12.7v-9.0" fill="none" stroke="#e8e8e8" stroke-width="0.9"/><path d="M201.4 63.8h13.2v-8.7" fill="none" stroke="#e7e7e7" stroke-width="0.9"/><path d="M-3.3 74.7h10.4v-9.0" fill="none" stroke="#e3e3e3" stroke-width="0.9"/><path d="M10.0 74.4h19.9v-8.7" fill="none" stroke="#ebebeb" stroke-width="0.9"/><path d="M32.9 75.0h20.8v-8.7" fill="none" stroke="#e8e8e8" stroke-width="0.9"/><path d="M56.4 74.5h13.1v-8.8" fill="none" stroke="#e7e7e7" stroke-width="0.9"/><path d="M72.2 74.0h21.3v-8.3" fill="none" stroke="#e2e2e2" stroke-width="0.9"/><path d="M95.8 75.1h14.1v-9.0" fill="none" stroke="#e8e8e8" stroke-width="0.9"/><path d="M112.5 74.9h13.2v-8.9" fill="none" stroke="#e2e2e2" stroke-width="0.9"/><path d="M128.1 75.1h12.3v-8.7" fill="none" stroke="#e3e3e3" stroke-width="0.9"/><path d="M143.5 75.0h17.2v-9.0" fill="none" stroke="#ececec" stroke-width="0.9"/><path d="M162.9 74.3h12.5v-8.7" fill="none" stroke="#e0e0e0" stroke-width="0.9"/><path d="M177.7 74.0h12.7v-8.3" fill="none" stroke="#e6e6e6" stroke-width="0.9"/><path d="M192.8 73.9h16.1v-8.1" fill="none" stroke="#ebebeb" stroke-width="0.9"/><path d="M-9.7 85.0h23.8v-8.3" fill="none" stroke="#e5e5e5" stroke-width="0.9"/><path d="M16.4 85.0h8.1v-8.3" fill="none" stroke="#e2e2e2" stroke-width="0.9"/><path d="M27.3 85.5h17.8v-8.4" fill="none" stroke="#e2e2e2" stroke-width="0.9"/><path d="M47.7 85.7h22.9v-8.6" fill="none" stroke="#e3e3e3" stroke-width="0.9"/><path d="M72.9 86.1h22.4v-8.9" fill="none" stroke="#eaeaea" stroke-width="0.9"/><path d="M98.1 85.5h15.5v-8.3" fill="none" stroke="#e9e9e9" stroke-width="0.9"/><path d="M116.1 85.5h13.8v-8.9" fill="none" stroke="#e8e8e8" stroke-width="0.9"/><path d="M132.8 85.5h13.6v-7.9" fill="none" stroke="#e0e0e0" stroke-width="0.9"/><path d="M149.3 85.1h15.8v-8.4" fill="none" stroke="#e4e4e4" stroke-width="0.9"/><path d="M167.6 85.7h7.9v-9.0" fill="none" stroke="#e2e2e2" stroke-width="0.9"/><path d="M177.8 85.3h10.6v-8.2" fill="none" stroke="#e6e6e6" stroke-width="0.9"/><path d="M191.0 84.7h17.2v-8.0" fill="none" stroke="#e1e1e1" stroke-width="0.9"/><path d="M-6.3 96.7h11.4v-8.0" fill="none" stroke="#eaeaea" stroke-width="0.9"/><path d="M7.2 96.6h22.5v-8.2" fill="none" stroke="#eaeaea" stroke-width="0.9"/><path d="M32.0 96.8h7.6v-8.4" fill="none" stroke="#e5e5e5" stroke-width="0.9"/><path d="M42.3 96.9h10.2v-8.1" fill="none" stroke="#e8e8e8" stroke-width="0.9"/><path d="M54.6 96.2h12.1v-7.9" fill="none" stroke="#ebebeb" stroke-width="0.9"/><path d="M69.2 96.4h8.3v-8.0" fill="none" stroke="#e6e6e6" stroke-width="0.9"/><path d="M80.4 96.5h23.5v-8.2" fill="none" stroke="#dedede" stroke-width="0.9"/><path d="M107.0 95.8h13.3v-8.0" fill="none" stroke="#eaeaea" stroke-width="0.9"/><path d="M122.4 96.9h18.5v-8.8" fill="none" stroke="#e2e2e2" stroke-width="0.9"/><path d="M143.4 96.6h20.6v-8.2" fill="none" stroke="#eaeaea" stroke-width="0.9"/><path d="M166.8 97.7h7.8v-8.8" fill="none" stroke="#e9e9e9" stroke-width="0.9"/><path d="M176.9 96.8h8.4v-9.0" fill="none" stroke="#eaeaea" stroke-width="0.9"/><path d="M187.5 97.9h17.2v-8.9" fill="none" stroke="#e6e6e6" stroke-width="0.9"/><path d="M206.9 96.2h16.3v-8.0" fill="none" stroke="#e1e1e1" stroke-width="0.9"/><path d="M-0.2 108.2h9.5v-8.6" fill="none" stroke="#e3e3e3" stroke-width="0.9"/><path d="M12.1 107.6h21.0v-8.2" fill="none" stroke="#eaeaea" stroke-width="0.9"/><path d="M36.0 108.2h10.5v-8.0" fill="none" stroke="#e3e3e3" stroke-width="0.9"/><path d="M49.0 108.1h8.6v-8.5" fill="none" stroke="#e3e3e3" stroke-width="0.9"/><path d="M59.6 107.9h12.1v-8.1" fill="none" stroke="#e6e6e6" stroke-width="0.9"/><path d="M74.9 107.5h12.1v-8.1" fill="none" stroke="#ececec" stroke-width="0.9"/><path d="M89.9 108.6h22.6v-8.8" fill="none" stroke="#eaeaea" stroke-width="0.9"/><path d="M115.4 109.2h10.5v-9.0" fill="none" stroke="#dfdfdf" stroke-width="0.9"/><path d="M128.6 108.2h19.6v-7.9" fill="none" stroke="#e3e3e3" stroke-width="0.9"/><path d="M151.4 108.8h20.2v-8.6" fill="none" stroke="#e3e3e3" stroke-width="0.9"/><path d="M174.1 107.4h17.7v-7.9" fill="none" stroke="#e9e9e9" stroke-width="0.9"/><path d="M194.4 108.0h10.5v-8.8" fill="none" stroke="#dfdfdf" stroke-width="0.9"/><path d="M-5.9 119.5h20.7v-8.9" fill="none" stroke="#ececec" stroke-width="0.9"/><path d="M17.4 119.8h20.2v-8.3" fill="none" stroke="#ebebeb" stroke-width="0.9"/><path d="M40.7 119.3h9.3v-8.3" fill="none" stroke="#e9e9e9" stroke-width="0.9"/><path d="M52.5 119.8h9.6v-8.9" fill="none" stroke="#e0e0e0" stroke-width="0.9"/><path d="M64.4 120.0h8.2v-8.5" fill="none" stroke="#e5e5e5" stroke-width="0.9"/><path d="M75.3 119.3h14.4v-8.6" fill="none" stroke="#ebebeb" stroke-width="0.9"/><path d="M92.7 118.9h18.1v-8.3" fill="none" stroke="#e6e6e6" stroke-width="0.9"/><path d="M113.6 119.5h19.3v-8.3" fill="none" stroke="#dedede" stroke-width="0.9"/><path d="M135.2 120.0h19.4v-8.5" fill="none" stroke="#e0e0e0" stroke-width="0.9"/><path d="M157.7 120.1h21.6v-8.5" fill="none" stroke="#e6e6e6" stroke-width="0.9"/><path d="M182.0 118.9h9.5v-7.9" fill="none" stroke="#ececec" stroke-width="0.9"/><path d="M194.6 119.6h22.2v-8.5" fill="none" stroke="#e6e6e6" stroke-width="0.9"/><path d="M-3.1 130.9h8.3v-8.9" fill="none" stroke="#e6e6e6" stroke-width="0.9"/><path d="M8.3 130.3h18.4v-8.6" fill="none" stroke="#ebebeb" stroke-width="0.9"/><path d="M29.3 131.0h23.4v-8.3" fill="none" stroke="#e6e6e6" stroke-width="0.9"/><path d="M54.9 129.7h8.1v-8.0" fill="none" stroke="#e9e9e9" stroke-width="0.9"/><path d="M65.6 130.2h13.9v-8.4" fill="none" stroke="#e8e8e8" stroke-width="0.9"/><path d="M82.5 130.3h21.3v-8.5" fill="none" stroke="#e0e0e0" stroke-width="0.9"/><path d="M106.8 131.1h8.2v-8.9" fill="none" stroke="#ebebeb" stroke-width="0.9"/><path d="M117.4 130.7h23.3v-8.9" fill="none" stroke="#e2e2e2" stroke-width="0.9"/><path d="M143.6 130.9h13.3v-8.7" fill="none" stroke="#ececec" stroke-width="0.9"/><path d="M159.7 131.0h9.9v-8.4" fill="none" stroke="#ececec" stroke-width="0.9"/><path d="M172.4 130.3h21.0v-8.2" fill="none" stroke="#e2e2e2" stroke-width="0.9"/><path d="M196.5 131.0h24.0v-9.0" fill="none" stroke="#e9e9e9" stroke-width="0.9"/><path d="M-11.3 141.9h20.2v-8.5" fill="none" stroke="#dfdfdf" stroke-width="0.9"/><path d="M11.1 142.9h7.1v-8.8" fill="none" stroke="#e8e8e8" stroke-width="0.9"/><path d="M20.8 142.2h21.6v-8.1" fill="none" stroke="#eaeaea" stroke-width="0.9"/><path d="M45.2 143.1h18.8v-9.0" fill="none" stroke="#e0e0e0" stroke-width="0.9"/><path d="M66.7 141.9h9.9v-7.9" fill="none" stroke="#e5e5e5" stroke-width="0.9"/><path d="M78.9 141.3h12.1v-8.2" fill="none" stroke="#ebebeb" stroke-width="0.9"/><path d="M93.2 142.3h15.4v-8.4" fill="none" stroke="#e0e0e0" stroke-width="0.9"/><path d="M111.7 141.7h20.7v-8.6" fill="none" stroke="#e3e3e3" stroke-width="0.9"/><path d="M135.6 142.0h7.1v-8.5" fill="none" stroke="#e2e2e2" stroke-width="0.9"/><path d="M145.1 142.0h7.4v-8.7" fill="none" stroke="#e1e1e1" stroke-width="0.9"/><path d="M154.5 141.8h9.3v-8.0" fill="none" stroke="#e7e7e7" stroke-width="0.9"/><path d="M166.8 142.0h19.6v-8.8" fill="none" stroke="#eaeaea" stroke-width="0.9"/><path d="M189.2 142.9h19.3v-8.9" fill="none" stroke="#e6e6e6" stroke-width="0.9"/><path d="M-4.4 153.0h9.9v-8.6" fill="none" stroke="#ebebeb" stroke-width="0.9"/><path d="M7.6 153.6h19.8v-8.7" fill="none" stroke="#e0e0e0" stroke-width="0.9"/><path d="M30.1 153.1h19.2v-8.7" fill="none" stroke="#e9e9e9" stroke-width="0.9"/><path d="M51.5 153.3h14.6v-9.0" fill="none" stroke="#e5e5e5" stroke-width="0.9"/><path d="M68.2 153.5h15.7v-8.8" fill="none" stroke="#dedede" stroke-width="0.9"/><path d="M87.0 153.4h9.8v-8.6" fill="none" stroke="#dfdfdf" stroke-width="0.9"/><path d="M99.3 153.8h9.1v-8.5" fill="none" stroke="#dfdfdf" stroke-width="0.9"/><path d="M111.6 153.5h8.0v-8.0" fill="none" stroke="#eaeaea" stroke-width="0.9"/><path d="M122.6 153.4h12.3v-8.5" fill="none" stroke="#e4e4e4" stroke-width="0.9"/><path d="M137.5 153.7h16.3v-8.6" fill="none" stroke="#e7e7e7" stroke-width="0.9"/><path d="M155.8 152.4h14.9v-7.9" fill="none" stroke="#e1e1e1" stroke-width="0.9"/><path d="M173.7 153.6h11.8v-8.4" fill="none" stroke="#e1e1e1" stroke-width="0.9"/><path d="M187.7 152.9h10.1v-8.4" fill="none" stroke="#e6e6e6" stroke-width="0.9"/><path d="M200.8 153.5h18.0v-8.1" fill="none" stroke="#e9e9e9" stroke-width="0.9"/><path d="M-5.2 164.3h10.0v-8.3" fill="none" stroke="#e6e6e6" stroke-width="0.9"/><path d="M7.4 164.8h18.6v-8.0" fill="none" stroke="#dedede" stroke-width="0.9"/><path d="M29.1 163.9h16.2v-8.1" fill="none" stroke="#e7e7e7" stroke-width="0.9"/><path d="M47.6 164.6h19.2v-8.4" fill="none" stroke="#e8e8e8" stroke-width="0.9"/><path d="M69.9 165.4h14.4v-9.0" fill="none" stroke="#dfdfdf" stroke-width="0.9"/><path d="M87.0 164.3h19.0v-8.1" fill="none" stroke="#e6e6e6" stroke-width="0.9"/><path d="M108.0 165.2h20.0v-8.5" fill="none" stroke="#dedede" stroke-width="0.9"/><path d="M131.1 165.0h9.1v-8.6" fill="none" stroke="#dedede" stroke-width="0.9"/><path d="M143.0 163.6h21.4v-8.0" fill="none" stroke="#e3e3e3" stroke-width="0.9"/><path d="M166.4 165.4h23.1v-9.0" fill="none" stroke="#e8e8e8" stroke-width="0.9"/><path d="M192.2 164.9h13.4v-8.9" fill="none" stroke="#e3e3e3" stroke-width="0.9"/><path d="M-11.1 176.0h10.5v-8.5" fill="none" stroke="#eaeaea" stroke-width="0.9"/><path d="M2.6 175.9h10.3v-8.9" fill="none" stroke="#dedede" stroke-width="0.9"/><path d="M15.0 176.4h16.8v-8.6" fill="none" stroke="#e4e4e4" stroke-width="0.9"/><path d="M34.2 175.9h15.6v-8.4" fill="none" stroke="#e7e7e7" stroke-width="0.9"/><path d="M52.6 176.1h8.0v-8.8" fill="none" stroke="#e5e5e5" stroke-width="0.9"/><path d="M63.1 175.4h18.5v-8.1" fill="none" stroke="#e1e1e1" stroke-width="0.9"/><path d="M83.9 176.2h15.5v-8.4" fill="none" stroke="#dfdfdf" stroke-width="0.9"/><path d="M101.5 177.1h13.9v-9.1" fill="none" stroke="#e2e2e2" stroke-width="0.9"/><path d="M117.8 177.1h9.5v-9.1" fill="none" stroke="#ececec" stroke-width="0.9"/><path d="M130.1 175.3h19.9v-8.4" fill="none" stroke="#e3e3e3" stroke-width="0.9"/><path d="M152.1 176.5h19.8v-8.9" fill="none" stroke="#e7e7e7" stroke-width="0.9"/><path d="M175.0 175.6h23.6v-8.5" fill="none" stroke="#e5e5e5" stroke-width="0.9"/><path d="M201.0 176.2h16.6v-8.1" fill="none" stroke="#dfdfdf" stroke-width="0.9"/><path d="M-4.3 186.5h20.1v-8.0" fill="none" stroke="#ececec" stroke-width="0.9"/><path d="M18.7 187.2h14.1v-8.2" fill="none" stroke="#dfdfdf" stroke-width="0.9"/><path d="M35.1 187.1h15.0v-8.0" fill="none" stroke="#ebebeb" stroke-width="0.9"/><path d="M52.5 186.3h19.2v-7.9" fill="none" stroke="#e9e9e9" stroke-width="0.9"/><path d="M74.5 187.2h8.1v-8.9" fill="none" stroke="#ebebeb" stroke-width="0.9"/><path d="M85.4 186.4h9.1v-8.1" fill="none" stroke="#e7e7e7" stroke-width="0.9"/><path d="M97.5 187.4h8.6v-8.6" fill="none" stroke="#e0e0e0" stroke-width="0.9"/><path d="M108.9 187.9h12.5v-8.6" fill="none" stroke="#e9e9e9" stroke-width="0.9"/><path d="M123.9 187.7h18.6v-8.9" fill="none" stroke="#e9e9e9" stroke-width="0.9"/><path d="M145.6 188.0h11.5v-8.8" fill="none" stroke="#e2e2e2" stroke-width="0.9"/><path d="M159.7 187.3h11.6v-8.1" fill="none" stroke="#e6e6e6" stroke-width="0.9"/><path d="M173.5 187.8h19.6v-8.9" fill="none" stroke="#dedede" stroke-width="0.9"/><path d="M195.2 187.5h21.8v-8.4" fill="none" stroke="#e9e9e9" stroke-width="0.9"/><path d="M-5.5 199.0h20.3v-8.7" fill="none" stroke="#e7e7e7" stroke-width="0.9"/><path d="M17.6 199.1h23.7v-9.0" fill="none" stroke="#e0e0e0" stroke-width="0.9"/><path d="M44.3 198.2h14.3v-8.2" fill="none" stroke="#e7e7e7" stroke-width="0.9"/><path d="M61.0 198.5h13.2v-8.2" fill="none" stroke="#e9e9e9" stroke-width="0.9"/><path d="M77.0 198.5h17.4v-8.5" fill="none" stroke="#e0e0e0" stroke-width="0.9"/><path d="M97.1 199.2h11.8v-9.1" fill="none" stroke="#e9e9e9" stroke-width="0.9"/><path d="M111.1 198.1h18.0v-8.2" fill="none" stroke="#e0e0e0" stroke-width="0.9"/><path d="M131.3 198.7h18.5v-8.2" fill="none" stroke="#e6e6e6" stroke-width="0.9"/><path d="M152.4 198.4h10.7v-8.0" fill="none" stroke="#e2e2e2" stroke-width="0.9"/><path d="M165.8 198.4h7.1v-8.0" fill="none" stroke="#ebebeb" stroke-width="0.9"/><path d="M176.0 197.8h14.3v-7.9" fill="none" stroke="#dfdfdf" stroke-width="0.9"/><path d="M192.5 199.1h18.8v-8.5" fill="none" stroke="#e3e3e3" stroke-width="0.9"/><path d="M-2.6 210.0h8.8v-8.4" fill="none" stroke="#e6e6e6" stroke-width="0.9"/><path d="M8.3 210.3h14.6v-9.0" fill="none" stroke="#dedede" stroke-width="0.9"/><path d="M25.9 209.8h9.3v-8.5" fill="none" stroke="#e8e8e8" stroke-width="0.9"/><path d="M37.7 209.7h21.5v-8.0" fill="none" stroke="#e5e5e5" stroke-width="0.9"/><path d="M61.5 209.7h22.8v-8.1" fill="none" stroke="#e4e4e4" stroke-width="0.9"/><path d="M87.1 209.8h11.5v-8.3" fill="none" stroke="#e6e6e6" stroke-width="0.9"/><path d="M100.8 209.3h19.9v-8.0" fill="none" stroke="#e3e3e3" stroke-width="0.9"/><path d="M123.5 209.1h22.6v-8.3" fill="none" stroke="#e2e2e2" stroke-width="0.9"/><path d="M148.2 210.2h15.8v-8.3" fill="none" stroke="#e8e8e8" stroke-width="0.9"/><path d="M166.9 210.1h7.7v-8.5" fill="none" stroke="#e1e1e1" stroke-width="0.9"/><path d="M177.7 210.0h21.2v-8.3" fill="none" stroke="#dedede" stroke-width="0.9"/><path d="M201.2 209.3h20.4v-8.1" fill="none" stroke="#e1e1e1" stroke-width="0.9"/><circle cx="70.2" cy="105.2" r="0.8" fill="#cfcfcf"/><circle cx="65.4" cy="137.0" r="0.8" fill="#cfcfcf"/><circle cx="6.2" cy="71.4" r="0.8" fill="#cfcfcf"/><circle cx="134.8" cy="94.6" r="0.8" fill="#cfcfcf"/><circle cx="4.1" cy="95.1" r="0.8" fill="#cfcfcf"/><circle cx="192.1" cy="108.1" r="0.8" fill="#cfcfcf"/><circle cx="151.2" cy="79.3" r="0.8" fill="#cfcfcf"/><circle cx="202.9" cy="108.7" r="0.8" fill="#cfcfcf"/><circle cx="167.8" cy="129.6" r="0.8" fill="#cfcfcf"/><circle cx="168.4" cy="81.2" r="0.8" fill="#cfcfcf"/><circle cx="192.2" cy="204.5" r="0.8" fill="#cfcfcf"/><circle cx="185.9" cy="187.9" r="0.8" fill="#cfcfcf"/><circle cx="75.4" cy="70.1" r="0.8" fill="#cfcfcf"/><circle cx="184.7" cy="170.9" r="0.8" fill="#cfcfcf"/><circle cx="122.3" cy="115.9" r="0.8" fill="#cfcfcf"/><circle cx="2.4" cy="115.7" r="0.8" fill="#cfcfcf"/><circle cx="12.1" cy="109.0" r="0.8" fill="#cfcfcf"/><circle cx="46.3" cy="125.8" r="0.8" fill="#cfcfcf"/><circle cx="32.7" cy="67.8" r="0.8" fill="#cfcfcf"/><circle cx="159.4" cy="119.9" r="0.8" fill="#cfcfcf"/><circle cx="27.6" cy="203.8" r="0.8" fill="#cfcfcf"/><circle cx="4.5" cy="85.4" r="0.8" fill="#cfcfcf"/><circle cx="147.8" cy="120.3" r="0.8" fill="#cfcfcf"/><circle cx="135.0" cy="187.0" r="0.8" fill="#cfcfcf"/><circle cx="19.9" cy="105.2" r="0.8" fill="#cfcfcf"/><circle cx="52.1" cy="124.1" r="0.8" fill="#cfcfcf"/><circle cx="96.2" cy="130.2" r="0.8" fill="#cfcfcf"/><circle cx="165.7" cy="103.9" r="0.8" fill="#cfcfcf"/><circle cx="87.6" cy="115.2" r="0.8" fill="#cfcfcf"/><circle cx="34.8" cy="189.0" r="0.8" fill="#cfcfcf"/><circle cx="80.8" cy="103.2" r="0.8" fill="#cfcfcf"/><circle cx="174.0" cy="172.5" r="0.8" fill="#cfcfcf"/><circle cx="206.5" cy="146.6" r="0.8" fill="#cfcfcf"/><circle cx="110.0" cy="89.0" r="0.8" fill="#cfcfcf"/><circle cx="161.0" cy="128.5" r="0.8" fill="#cfcfcf"/><circle cx="2.2" cy="116.6" r="0.8" fill="#cfcfcf"/><circle cx="138.5" cy="74.3" r="0.8" fill="#cfcfcf"/><circle cx="171.8" cy="153.5" r="0.8" fill="#cfcfcf"/><circle cx="183.4" cy="60.5" r="0.8" fill="#cfcfcf"/><circle cx="137.0" cy="116.2" r="0.8" fill="#cfcfcf"/></g><path d="M0 0H12L0 12Z" fill="#7a7a7a"/><path d="M207 0H195L207 12Z" fill="#7a7a7a"/><path d="M0 207H12L0 195Z" fill="#7a7a7a"/><path d="M207 207H195L207 195Z" fill="#7a7a7a"/><path d="M12 0L0 12M195 0L207 12M0 195L12 207M207 195L195 207" stroke="#fff" stroke-width="1.2"/></svg><div class="body" style="top:261.0px;height:42.5px"></div><div class="lbl" style="left:9.5px;top:269.5px">Mapping source</div></div><div class="mi" style="left:238px;top:373.5px"></div><div class="dot" style="left:250px;top:653px"></div><div class="dot" style="left:245px;top:658px"></div><div class="dot" style="left:250px;top:658px"></div><div class="sk skl" style="left:32px;top:629.5px"></div><div class="sk skr on" style="left:257px;top:502.45px"></div><div class="node" style="left:44px;top:679px;width:212px;height:303.5px"><div class="hdr" style="height:48.5px;background:#108c52"></div><div class="ttl" style="left:8.5px;top:5.600000000000001px">Normal</div><div class="sub" style="left:8.5px;top:26.400000000000002px">VRayBitmap</div><div class="frame" style="top:48.5px;height:212.5px"></div><svg class="img" style="left:2px;top:51.0px" width="207" height="207" viewBox="0 0 207 207"><defs><filter id="f_nrm" x="0" y="0" width="100%" height="100%"><feGaussianBlur stdDeviation="0.7"/></filter></defs><rect width="207" height="207" fill="#b4b6fc"/><g filter="url(#f_nrm)"><path d="M-3.1 7.5h28.4" stroke="#c9a0f4" stroke-width="1.4"/><path d="M25.3 -1.6v8.3" stroke="#c2a8f6" stroke-width="1.0"/><path d="M-3.1 -1.3h28.4" stroke="#a8cafe" stroke-width="1.1"/><path d="M27.6 7.4h17.5" stroke="#c9a0f4" stroke-width="1.4"/><path d="M45.1 -2.3v8.9" stroke="#c2a8f6" stroke-width="1.0"/><path d="M27.6 -2.0h17.5" stroke="#a8cafe" stroke-width="1.1"/><path d="M48.0 6.9h15.1" stroke="#c9a0f4" stroke-width="1.4"/><path d="M63.1 -2.3v8.5" stroke="#c2a8f6" stroke-width="1.0"/><path d="M48.0 -2.0h15.1" stroke="#a8cafe" stroke-width="1.1"/><path d="M65.5 7.0h22.4" stroke="#c9a0f4" stroke-width="1.4"/><path d="M87.8 -1.9v8.1" stroke="#c2a8f6" stroke-width="1.0"/><path d="M65.5 -1.6h22.4" stroke="#a8cafe" stroke-width="1.1"/><path d="M89.8 8.2h18.6" stroke="#c9a0f4" stroke-width="1.4"/><path d="M108.4 -1.6v8.9" stroke="#c2a8f6" stroke-width="1.0"/><path d="M89.8 -1.3h18.6" stroke="#a8cafe" stroke-width="1.1"/><path d="M111.4 7.2h31.3" stroke="#c9a0f4" stroke-width="1.4"/><path d="M142.8 -1.7v8.1" stroke="#c2a8f6" stroke-width="1.0"/><path d="M111.4 -1.4h31.3" stroke="#a8cafe" stroke-width="1.1"/><path d="M145.9 8.0h31.1" stroke="#c9a0f4" stroke-width="1.4"/><path d="M177.0 -1.6v8.8" stroke="#c2a8f6" stroke-width="1.0"/><path d="M145.9 -1.3h31.1" stroke="#a8cafe" stroke-width="1.1"/><path d="M179.5 7.1h30.1" stroke="#c9a0f4" stroke-width="1.4"/><path d="M209.7 -2.1v8.4" stroke="#c2a8f6" stroke-width="1.0"/><path d="M179.5 -1.8h30.1" stroke="#a8cafe" stroke-width="1.1"/><path d="M-5.2 19.4h19.5" stroke="#c9a0f4" stroke-width="1.4"/><path d="M14.4 9.7v9.0" stroke="#c2a8f6" stroke-width="1.0"/><path d="M-5.2 10.0h19.5" stroke="#a8cafe" stroke-width="1.1"/><path d="M17.3 18.4h35.7" stroke="#c9a0f4" stroke-width="1.4"/><path d="M53.0 9.4v8.3" stroke="#c2a8f6" stroke-width="1.0"/><path d="M17.3 9.7h35.7" stroke="#a8cafe" stroke-width="1.1"/><path d="M55.9 18.3h15.2" stroke="#c9a0f4" stroke-width="1.4"/><path d="M71.1 9.2v8.3" stroke="#c2a8f6" stroke-width="1.0"/><path d="M55.9 9.5h15.2" stroke="#a8cafe" stroke-width="1.1"/><path d="M73.3 18.3h16.9" stroke="#c9a0f4" stroke-width="1.4"/><path d="M90.2 9.0v8.5" stroke="#c2a8f6" stroke-width="1.0"/><path d="M73.3 9.3h16.9" stroke="#a8cafe" stroke-width="1.1"/><path d="M92.7 18.3h26.5" stroke="#c9a0f4" stroke-width="1.4"/><path d="M119.3 8.9v8.6" stroke="#c2a8f6" stroke-width="1.0"/><path d="M92.7 9.2h26.5" stroke="#a8cafe" stroke-width="1.1"/><path d="M121.9 18.6h17.7" stroke="#c9a0f4" stroke-width="1.4"/><path d="M139.5 8.9v8.8" stroke="#c2a8f6" stroke-width="1.0"/><path d="M121.9 9.2h17.7" stroke="#a8cafe" stroke-width="1.1"/><path d="M142.0 19.0h13.8" stroke="#c9a0f4" stroke-width="1.4"/><path d="M155.7 9.8v8.3" stroke="#c2a8f6" stroke-width="1.0"/><path d="M142.0 10.1h13.8" stroke="#a8cafe" stroke-width="1.1"/><path d="M158.2 17.5h29.3" stroke="#c9a0f4" stroke-width="1.4"/><path d="M187.4 8.8v8.0" stroke="#c2a8f6" stroke-width="1.0"/><path d="M158.2 9.1h29.3" stroke="#a8cafe" stroke-width="1.1"/><path d="M189.6 18.4h31.3" stroke="#c9a0f4" stroke-width="1.4"/><path d="M221.0 9.5v8.1" stroke="#c2a8f6" stroke-width="1.0"/><path d="M189.6 9.8h31.3" stroke="#a8cafe" stroke-width="1.1"/><path d="M-5.0 29.8h32.8" stroke="#c9a0f4" stroke-width="1.4"/><path d="M27.9 21.0v8.0" stroke="#c2a8f6" stroke-width="1.0"/><path d="M-5.0 21.3h32.8" stroke="#a8cafe" stroke-width="1.1"/><path d="M30.1 30.3h32.5" stroke="#c9a0f4" stroke-width="1.4"/><path d="M62.6 20.9v8.7" stroke="#c2a8f6" stroke-width="1.0"/><path d="M30.1 21.2h32.5" stroke="#a8cafe" stroke-width="1.1"/><path d="M64.8 30.0h35.3" stroke="#c9a0f4" stroke-width="1.4"/><path d="M100.1 20.9v8.4" stroke="#c2a8f6" stroke-width="1.0"/><path d="M64.8 21.2h35.3" stroke="#a8cafe" stroke-width="1.1"/><path d="M102.3 29.9h26.8" stroke="#c9a0f4" stroke-width="1.4"/><path d="M129.2 20.7v8.4" stroke="#c2a8f6" stroke-width="1.0"/><path d="M102.3 21.0h26.8" stroke="#a8cafe" stroke-width="1.1"/><path d="M131.6 29.8h29.5" stroke="#c9a0f4" stroke-width="1.4"/><path d="M161.0 20.4v8.7" stroke="#c2a8f6" stroke-width="1.0"/><path d="M131.6 20.7h29.5" stroke="#a8cafe" stroke-width="1.1"/><path d="M163.2 30.0h28.4" stroke="#c9a0f4" stroke-width="1.4"/><path d="M191.7 20.3v9.0" stroke="#c2a8f6" stroke-width="1.0"/><path d="M163.2 20.6h28.4" stroke="#a8cafe" stroke-width="1.1"/><path d="M193.7 29.9h27.4" stroke="#c9a0f4" stroke-width="1.4"/><path d="M221.2 20.7v8.4" stroke="#c2a8f6" stroke-width="1.0"/><path d="M193.7 21.0h27.4" stroke="#a8cafe" stroke-width="1.1"/><path d="M-5.3 41.1h20.2" stroke="#c9a0f4" stroke-width="1.4"/><path d="M15.0 31.3v9.0" stroke="#c2a8f6" stroke-width="1.0"/><path d="M-5.3 31.6h20.2" stroke="#a8cafe" stroke-width="1.1"/><path d="M18.2 41.2h14.9" stroke="#c9a0f4" stroke-width="1.4"/><path d="M33.1 31.6v8.7" stroke="#c2a8f6" stroke-width="1.0"/><path d="M18.2 31.9h14.9" stroke="#a8cafe" stroke-width="1.1"/><path d="M35.8 41.1h13.9" stroke="#c9a0f4" stroke-width="1.4"/><path d="M49.6 31.7v8.5" stroke="#c2a8f6" stroke-width="1.0"/><path d="M35.8 32.0h13.9" stroke="#a8cafe" stroke-width="1.1"/><path d="M52.6 41.4h12.1" stroke="#c9a0f4" stroke-width="1.4"/><path d="M64.8 31.9v8.7" stroke="#c2a8f6" stroke-width="1.0"/><path d="M52.6 32.2h12.1" stroke="#a8cafe" stroke-width="1.1"/><path d="M67.9 41.4h24.4" stroke="#c9a0f4" stroke-width="1.4"/><path d="M92.3 32.1v8.5" stroke="#c2a8f6" stroke-width="1.0"/><path d="M67.9 32.4h24.4" stroke="#a8cafe" stroke-width="1.1"/><path d="M94.7 41.7h12.8" stroke="#c9a0f4" stroke-width="1.4"/><path d="M107.5 32.4v8.5" stroke="#c2a8f6" stroke-width="1.0"/><path d="M94.7 32.7h12.8" stroke="#a8cafe" stroke-width="1.1"/><path d="M110.4 41.4h18.2" stroke="#c9a0f4" stroke-width="1.4"/><path d="M128.6 32.3v8.3" stroke="#c2a8f6" stroke-width="1.0"/><path d="M110.4 32.6h18.2" stroke="#a8cafe" stroke-width="1.1"/><path d="M130.9 41.1h26.1" stroke="#c9a0f4" stroke-width="1.4"/><path d="M157.0 31.6v8.7" stroke="#c2a8f6" stroke-width="1.0"/><path d="M130.9 31.9h26.1" stroke="#a8cafe" stroke-width="1.1"/><path d="M159.3 40.8h16.9" stroke="#c9a0f4" stroke-width="1.4"/><path d="M176.2 31.3v8.7" stroke="#c2a8f6" stroke-width="1.0"/><path d="M159.3 31.6h16.9" stroke="#a8cafe" stroke-width="1.1"/><path d="M178.7 41.0h14.1" stroke="#c9a0f4" stroke-width="1.4"/><path d="M192.8 32.0v8.2" stroke="#c2a8f6" stroke-width="1.0"/><path d="M178.7 32.3h14.1" stroke="#a8cafe" stroke-width="1.1"/><path d="M194.8 41.5h30.6" stroke="#c9a0f4" stroke-width="1.4"/><path d="M225.3 31.9v8.9" stroke="#c2a8f6" stroke-width="1.0"/><path d="M194.8 32.2h30.6" stroke="#a8cafe" stroke-width="1.1"/><path d="M-4.0 52.1h18.9" stroke="#c9a0f4" stroke-width="1.4"/><path d="M15.0 42.8v8.6" stroke="#c2a8f6" stroke-width="1.0"/><path d="M-4.0 43.1h18.9" stroke="#a8cafe" stroke-width="1.1"/><path d="M18.0 51.8h14.7" stroke="#c9a0f4" stroke-width="1.4"/><path d="M32.7 42.9v8.1" stroke="#c2a8f6" stroke-width="1.0"/><path d="M18.0 43.2h14.7" stroke="#a8cafe" stroke-width="1.1"/><path d="M35.0 52.6h21.3" stroke="#c9a0f4" stroke-width="1.4"/><path d="M56.4 42.8v9.1" stroke="#c2a8f6" stroke-width="1.0"/><path d="M35.0 43.1h21.3" stroke="#a8cafe" stroke-width="1.1"/><path d="M58.8 52.6h22.6" stroke="#c9a0f4" stroke-width="1.4"/><path d="M81.4 43.8v8.0" stroke="#c2a8f6" stroke-width="1.0"/><path d="M58.8 44.1h22.6" stroke="#a8cafe" stroke-width="1.1"/><path d="M83.4 53.3h24.8" stroke="#c9a0f4" stroke-width="1.4"/><path d="M108.3 43.6v8.9" stroke="#c2a8f6" stroke-width="1.0"/><path d="M83.4 43.9h24.8" stroke="#a8cafe" stroke-width="1.1"/><path d="M110.7 52.0h33.4" stroke="#c9a0f4" stroke-width="1.4"/><path d="M144.1 42.8v8.4" stroke="#c2a8f6" stroke-width="1.0"/><path d="M110.7 43.1h33.4" stroke="#a8cafe" stroke-width="1.1"/><path d="M146.1 51.6h18.0" stroke="#c9a0f4" stroke-width="1.4"/><path d="M164.1 42.8v8.1" stroke="#c2a8f6" stroke-width="1.0"/><path d="M146.1 43.1h18.0" stroke="#a8cafe" stroke-width="1.1"/><path d="M166.6 53.0h20.9" stroke="#c9a0f4" stroke-width="1.4"/><path d="M187.6 43.6v8.7" stroke="#c2a8f6" stroke-width="1.0"/><path d="M166.6 43.9h20.9" stroke="#a8cafe" stroke-width="1.1"/><path d="M189.8 52.8h29.2" stroke="#c9a0f4" stroke-width="1.4"/><path d="M219.1 43.7v8.3" stroke="#c2a8f6" stroke-width="1.0"/><path d="M189.8 44.0h29.2" stroke="#a8cafe" stroke-width="1.1"/><path d="M-11.0 63.9h22.6" stroke="#c9a0f4" stroke-width="1.4"/><path d="M11.5 54.6v8.4" stroke="#c2a8f6" stroke-width="1.0"/><path d="M-11.0 54.9h22.6" stroke="#a8cafe" stroke-width="1.1"/><path d="M14.5 63.8h33.5" stroke="#c9a0f4" stroke-width="1.4"/><path d="M48.1 54.1v9.0" stroke="#c2a8f6" stroke-width="1.0"/><path d="M14.5 54.4h33.5" stroke="#a8cafe" stroke-width="1.1"/><path d="M50.7 63.5h31.5" stroke="#c9a0f4" stroke-width="1.4"/><path d="M82.2 54.3v8.5" stroke="#c2a8f6" stroke-width="1.0"/><path d="M50.7 54.6h31.5" stroke="#a8cafe" stroke-width="1.1"/><path d="M85.4 63.8h19.1" stroke="#c9a0f4" stroke-width="1.4"/><path d="M104.5 54.0v9.0" stroke="#c2a8f6" stroke-width="1.0"/><path d="M85.4 54.3h19.1" stroke="#a8cafe" stroke-width="1.1"/><path d="M106.6 64.5h29.4" stroke="#c9a0f4" stroke-width="1.4"/><path d="M136.0 54.8v9.0" stroke="#c2a8f6" stroke-width="1.0"/><path d="M106.6 55.1h29.4" stroke="#a8cafe" stroke-width="1.1"/><path d="M139.0 63.3h36.0" stroke="#c9a0f4" stroke-width="1.4"/><path d="M175.0 54.4v8.1" stroke="#c2a8f6" stroke-width="1.0"/><path d="M139.0 54.7h36.0" stroke="#a8cafe" stroke-width="1.1"/><path d="M177.8 63.3h32.0" stroke="#c9a0f4" stroke-width="1.4"/><path d="M209.8 54.2v8.2" stroke="#c2a8f6" stroke-width="1.0"/><path d="M177.8 54.5h32.0" stroke="#a8cafe" stroke-width="1.1"/><path d="M-1.3 74.5h19.4" stroke="#c9a0f4" stroke-width="1.4"/><path d="M18.1 65.8v7.9" stroke="#c2a8f6" stroke-width="1.0"/><path d="M-1.3 66.1h19.4" stroke="#a8cafe" stroke-width="1.1"/><path d="M20.4 74.6h30.8" stroke="#c9a0f4" stroke-width="1.4"/><path d="M51.2 65.2v8.6" stroke="#c2a8f6" stroke-width="1.0"/><path d="M20.4 65.5h30.8" stroke="#a8cafe" stroke-width="1.1"/><path d="M53.3 75.8h18.2" stroke="#c9a0f4" stroke-width="1.4"/><path d="M71.5 66.3v8.7" stroke="#c2a8f6" stroke-width="1.0"/><path d="M53.3 66.6h18.2" stroke="#a8cafe" stroke-width="1.1"/><path d="M73.8 74.6h32.4" stroke="#c9a0f4" stroke-width="1.4"/><path d="M106.2 65.7v8.1" stroke="#c2a8f6" stroke-width="1.0"/><path d="M73.8 66.0h32.4" stroke="#a8cafe" stroke-width="1.1"/><path d="M109.4 74.8h30.3" stroke="#c9a0f4" stroke-width="1.4"/><path d="M139.7 65.5v8.5" stroke="#c2a8f6" stroke-width="1.0"/><path d="M109.4 65.8h30.3" stroke="#a8cafe" stroke-width="1.1"/><path d="M142.2 74.7h33.6" stroke="#c9a0f4" stroke-width="1.4"/><path d="M175.9 65.4v8.5" stroke="#c2a8f6" stroke-width="1.0"/><path d="M142.2 65.7h33.6" stroke="#a8cafe" stroke-width="1.1"/><path d="M178.3 75.6h23.4" stroke="#c9a0f4" stroke-width="1.4"/><path d="M201.8 65.9v8.9" stroke="#c2a8f6" stroke-width="1.0"/><path d="M178.3 66.2h23.4" stroke="#a8cafe" stroke-width="1.1"/><path d="M203.8 75.0h31.7" stroke="#c9a0f4" stroke-width="1.4"/><path d="M235.5 65.3v8.9" stroke="#c2a8f6" stroke-width="1.0"/><path d="M203.8 65.6h31.7" stroke="#a8cafe" stroke-width="1.1"/><path d="M-3.7 86.4h33.2" stroke="#c9a0f4" stroke-width="1.4"/><path d="M29.6 77.1v8.5" stroke="#c2a8f6" stroke-width="1.0"/><path d="M-3.7 77.4h33.2" stroke="#a8cafe" stroke-width="1.1"/><path d="M32.6 86.3h17.1" stroke="#c9a0f4" stroke-width="1.4"/><path d="M49.7 77.3v8.2" stroke="#c2a8f6" stroke-width="1.0"/><path d="M32.6 77.6h17.1" stroke="#a8cafe" stroke-width="1.1"/><path d="M52.2 87.4h35.0" stroke="#c9a0f4" stroke-width="1.4"/><path d="M87.2 77.5v9.1" stroke="#c2a8f6" stroke-width="1.0"/><path d="M52.2 77.8h35.0" stroke="#a8cafe" stroke-width="1.1"/><path d="M89.4 86.3h32.2" stroke="#c9a0f4" stroke-width="1.4"/><path d="M121.6 76.6v8.9" stroke="#c2a8f6" stroke-width="1.0"/><path d="M89.4 76.9h32.2" stroke="#a8cafe" stroke-width="1.1"/><path d="M124.2 86.7h34.2" stroke="#c9a0f4" stroke-width="1.4"/><path d="M158.4 77.1v8.8" stroke="#c2a8f6" stroke-width="1.0"/><path d="M124.2 77.4h34.2" stroke="#a8cafe" stroke-width="1.1"/><path d="M161.1 85.8h17.8" stroke="#c9a0f4" stroke-width="1.4"/><path d="M179.0 76.5v8.5" stroke="#c2a8f6" stroke-width="1.0"/><path d="M161.1 76.8h17.8" stroke="#a8cafe" stroke-width="1.1"/><path d="M181.5 86.3h30.2" stroke="#c9a0f4" stroke-width="1.4"/><path d="M211.7 76.8v8.7" stroke="#c2a8f6" stroke-width="1.0"/><path d="M181.5 77.1h30.2" stroke="#a8cafe" stroke-width="1.1"/><path d="M-8.4 97.5h22.3" stroke="#c9a0f4" stroke-width="1.4"/><path d="M13.8 88.7v8.0" stroke="#c2a8f6" stroke-width="1.0"/><path d="M-8.4 89.0h22.3" stroke="#a8cafe" stroke-width="1.1"/><path d="M16.0 97.6h33.9" stroke="#c9a0f4" stroke-width="1.4"/><path d="M49.9 88.8v8.0" stroke="#c2a8f6" stroke-width="1.0"/><path d="M16.0 89.1h33.9" stroke="#a8cafe" stroke-width="1.1"/><path d="M52.9 97.6h28.4" stroke="#c9a0f4" stroke-width="1.4"/><path d="M81.3 88.6v8.2" stroke="#c2a8f6" stroke-width="1.0"/><path d="M52.9 88.9h28.4" stroke="#a8cafe" stroke-width="1.1"/><path d="M84.0 98.4h18.2" stroke="#c9a0f4" stroke-width="1.4"/><path d="M102.1 88.7v8.9" stroke="#c2a8f6" stroke-width="1.0"/><path d="M84.0 89.0h18.2" stroke="#a8cafe" stroke-width="1.1"/><path d="M104.9 97.7h13.4" stroke="#c9a0f4" stroke-width="1.4"/><path d="M118.2 88.5v8.3" stroke="#c2a8f6" stroke-width="1.0"/><path d="M104.9 88.8h13.4" stroke="#a8cafe" stroke-width="1.1"/><path d="M120.8 97.1h30.6" stroke="#c9a0f4" stroke-width="1.4"/><path d="M151.4 88.3v8.0" stroke="#c2a8f6" stroke-width="1.0"/><path d="M120.8 88.6h30.6" stroke="#a8cafe" stroke-width="1.1"/><path d="M154.4 97.5h24.0" stroke="#c9a0f4" stroke-width="1.4"/><path d="M178.4 88.3v8.4" stroke="#c2a8f6" stroke-width="1.0"/><path d="M154.4 88.6h24.0" stroke="#a8cafe" stroke-width="1.1"/><path d="M181.5 97.0h22.7" stroke="#c9a0f4" stroke-width="1.4"/><path d="M204.2 88.2v8.0" stroke="#c2a8f6" stroke-width="1.0"/><path d="M181.5 88.5h22.7" stroke="#a8cafe" stroke-width="1.1"/><path d="M207.0 97.3h33.9" stroke="#c9a0f4" stroke-width="1.4"/><path d="M240.9 88.3v8.3" stroke="#c2a8f6" stroke-width="1.0"/><path d="M207.0 88.6h33.9" stroke="#a8cafe" stroke-width="1.1"/><path d="M-5.7 109.0h21.9" stroke="#c9a0f4" stroke-width="1.4"/><path d="M16.2 100.0v8.1" stroke="#c2a8f6" stroke-width="1.0"/><path d="M-5.7 100.3h21.9" stroke="#a8cafe" stroke-width="1.1"/><path d="M19.4 109.2h22.7" stroke="#c9a0f4" stroke-width="1.4"/><path d="M42.1 99.8v8.6" stroke="#c2a8f6" stroke-width="1.0"/><path d="M19.4 100.1h22.7" stroke="#a8cafe" stroke-width="1.1"/><path d="M45.0 108.9h13.9" stroke="#c9a0f4" stroke-width="1.4"/><path d="M58.9 99.3v8.8" stroke="#c2a8f6" stroke-width="1.0"/><path d="M45.0 99.6h13.9" stroke="#a8cafe" stroke-width="1.1"/><path d="M61.3 108.1h19.2" stroke="#c9a0f4" stroke-width="1.4"/><path d="M80.5 99.3v7.9" stroke="#c2a8f6" stroke-width="1.0"/><path d="M61.3 99.6h19.2" stroke="#a8cafe" stroke-width="1.1"/><path d="M83.7 109.9h19.1" stroke="#c9a0f4" stroke-width="1.4"/><path d="M102.7 100.3v8.9" stroke="#c2a8f6" stroke-width="1.0"/><path d="M83.7 100.6h19.1" stroke="#a8cafe" stroke-width="1.1"/><path d="M104.8 108.9h14.7" stroke="#c9a0f4" stroke-width="1.4"/><path d="M119.5 99.2v8.9" stroke="#c2a8f6" stroke-width="1.0"/><path d="M104.8 99.5h14.7" stroke="#a8cafe" stroke-width="1.1"/><path d="M122.0 108.8h17.1" stroke="#c9a0f4" stroke-width="1.4"/><path d="M139.1 99.1v8.9" stroke="#c2a8f6" stroke-width="1.0"/><path d="M122.0 99.4h17.1" stroke="#a8cafe" stroke-width="1.1"/><path d="M141.9 109.4h13.2" stroke="#c9a0f4" stroke-width="1.4"/><path d="M155.1 99.8v8.8" stroke="#c2a8f6" stroke-width="1.0"/><path d="M141.9 100.1h13.2" stroke="#a8cafe" stroke-width="1.1"/><path d="M158.2 109.0h27.8" stroke="#c9a0f4" stroke-width="1.4"/><path d="M186.0 99.9v8.2" stroke="#c2a8f6" stroke-width="1.0"/><path d="M158.2 100.2h27.8" stroke="#a8cafe" stroke-width="1.1"/><path d="M189.0 108.9h32.5" stroke="#c9a0f4" stroke-width="1.4"/><path d="M221.4 99.2v8.9" stroke="#c2a8f6" stroke-width="1.0"/><path d="M189.0 99.5h32.5" stroke="#a8cafe" stroke-width="1.1"/><path d="M-6.2 119.6h24.5" stroke="#c9a0f4" stroke-width="1.4"/><path d="M18.3 110.6v8.2" stroke="#c2a8f6" stroke-width="1.0"/><path d="M-6.2 110.9h24.5" stroke="#a8cafe" stroke-width="1.1"/><path d="M21.1 120.1h22.2" stroke="#c9a0f4" stroke-width="1.4"/><path d="M43.4 110.7v8.6" stroke="#c2a8f6" stroke-width="1.0"/><path d="M21.1 111.0h22.2" stroke="#a8cafe" stroke-width="1.1"/><path d="M45.7 120.7h25.9" stroke="#c9a0f4" stroke-width="1.4"/><path d="M71.6 111.5v8.4" stroke="#c2a8f6" stroke-width="1.0"/><path d="M45.7 111.8h25.9" stroke="#a8cafe" stroke-width="1.1"/><path d="M73.9 121.0h29.2" stroke="#c9a0f4" stroke-width="1.4"/><path d="M103.1 111.2v9.0" stroke="#c2a8f6" stroke-width="1.0"/><path d="M73.9 111.5h29.2" stroke="#a8cafe" stroke-width="1.1"/><path d="M105.3 119.4h32.6" stroke="#c9a0f4" stroke-width="1.4"/><path d="M137.9 110.7v7.9" stroke="#c2a8f6" stroke-width="1.0"/><path d="M105.3 111.0h32.6" stroke="#a8cafe" stroke-width="1.1"/><path d="M140.8 120.1h17.3" stroke="#c9a0f4" stroke-width="1.4"/><path d="M158.1 110.5v8.7" stroke="#c2a8f6" stroke-width="1.0"/><path d="M140.8 110.8h17.3" stroke="#a8cafe" stroke-width="1.1"/><path d="M160.7 120.1h14.5" stroke="#c9a0f4" stroke-width="1.4"/><path d="M175.2 111.1v8.3" stroke="#c2a8f6" stroke-width="1.0"/><path d="M160.7 111.4h14.5" stroke="#a8cafe" stroke-width="1.1"/><path d="M177.7 120.4h29.0" stroke="#c9a0f4" stroke-width="1.4"/><path d="M206.7 110.8v8.8" stroke="#c2a8f6" stroke-width="1.0"/><path d="M177.7 111.1h29.0" stroke="#a8cafe" stroke-width="1.1"/><path d="M-0.0 131.6h33.3" stroke="#c9a0f4" stroke-width="1.4"/><path d="M33.3 121.8v9.0" stroke="#c2a8f6" stroke-width="1.0"/><path d="M-0.0 122.1h33.3" stroke="#a8cafe" stroke-width="1.1"/><path d="M36.2 131.6h31.6" stroke="#c9a0f4" stroke-width="1.4"/><path d="M67.9 122.2v8.6" stroke="#c2a8f6" stroke-width="1.0"/><path d="M36.2 122.5h31.6" stroke="#a8cafe" stroke-width="1.1"/><path d="M70.0 131.3h12.0" stroke="#c9a0f4" stroke-width="1.4"/><path d="M82.1 122.0v8.5" stroke="#c2a8f6" stroke-width="1.0"/><path d="M70.0 122.3h12.0" stroke="#a8cafe" stroke-width="1.1"/><path d="M84.2 132.0h33.7" stroke="#c9a0f4" stroke-width="1.4"/><path d="M118.0 122.1v9.1" stroke="#c2a8f6" stroke-width="1.0"/><path d="M84.2 122.4h33.7" stroke="#a8cafe" stroke-width="1.1"/><path d="M120.9 132.4h29.9" stroke="#c9a0f4" stroke-width="1.4"/><path d="M150.8 122.6v9.0" stroke="#c2a8f6" stroke-width="1.0"/><path d="M120.9 122.9h29.9" stroke="#a8cafe" stroke-width="1.1"/><path d="M153.5 131.4h27.1" stroke="#c9a0f4" stroke-width="1.4"/><path d="M180.6 122.7v8.0" stroke="#c2a8f6" stroke-width="1.0"/><path d="M153.5 123.0h27.1" stroke="#a8cafe" stroke-width="1.1"/><path d="M183.3 131.7h30.5" stroke="#c9a0f4" stroke-width="1.4"/><path d="M213.8 122.4v8.5" stroke="#c2a8f6" stroke-width="1.0"/><path d="M183.3 122.7h30.5" stroke="#a8cafe" stroke-width="1.1"/><path d="M-7.4 143.8h21.0" stroke="#c9a0f4" stroke-width="1.4"/><path d="M13.6 133.9v9.1" stroke="#c2a8f6" stroke-width="1.0"/><path d="M-7.4 134.2h21.0" stroke="#a8cafe" stroke-width="1.1"/><path d="M16.0 143.2h22.3" stroke="#c9a0f4" stroke-width="1.4"/><path d="M38.3 133.7v8.8" stroke="#c2a8f6" stroke-width="1.0"/><path d="M16.0 134.0h22.3" stroke="#a8cafe" stroke-width="1.1"/><path d="M40.8 142.9h32.0" stroke="#c9a0f4" stroke-width="1.4"/><path d="M72.8 133.7v8.4" stroke="#c2a8f6" stroke-width="1.0"/><path d="M40.8 134.0h32.0" stroke="#a8cafe" stroke-width="1.1"/><path d="M75.7 143.2h22.6" stroke="#c9a0f4" stroke-width="1.4"/><path d="M98.3 133.9v8.5" stroke="#c2a8f6" stroke-width="1.0"/><path d="M75.7 134.2h22.6" stroke="#a8cafe" stroke-width="1.1"/><path d="M101.2 142.5h29.8" stroke="#c9a0f4" stroke-width="1.4"/><path d="M131.0 133.7v8.0" stroke="#c2a8f6" stroke-width="1.0"/><path d="M101.2 134.0h29.8" stroke="#a8cafe" stroke-width="1.1"/><path d="M133.7 143.1h16.5" stroke="#c9a0f4" stroke-width="1.4"/><path d="M150.2 133.5v8.8" stroke="#c2a8f6" stroke-width="1.0"/><path d="M133.7 133.8h16.5" stroke="#a8cafe" stroke-width="1.1"/><path d="M152.8 143.3h33.6" stroke="#c9a0f4" stroke-width="1.4"/><path d="M186.4 133.4v9.0" stroke="#c2a8f6" stroke-width="1.0"/><path d="M152.8 133.7h33.6" stroke="#a8cafe" stroke-width="1.1"/><path d="M189.3 142.1h23.0" stroke="#c9a0f4" stroke-width="1.4"/><path d="M212.3 133.2v8.1" stroke="#c2a8f6" stroke-width="1.0"/><path d="M189.3 133.5h23.0" stroke="#a8cafe" stroke-width="1.1"/><path d="M-5.2 154.6h25.6" stroke="#c9a0f4" stroke-width="1.4"/><path d="M20.4 144.8v9.0" stroke="#c2a8f6" stroke-width="1.0"/><path d="M-5.2 145.1h25.6" stroke="#a8cafe" stroke-width="1.1"/><path d="M23.4 154.0h29.6" stroke="#c9a0f4" stroke-width="1.4"/><path d="M53.1 144.8v8.4" stroke="#c2a8f6" stroke-width="1.0"/><path d="M23.4 145.1h29.6" stroke="#a8cafe" stroke-width="1.1"/><path d="M55.1 154.5h28.8" stroke="#c9a0f4" stroke-width="1.4"/><path d="M83.9 145.2v8.6" stroke="#c2a8f6" stroke-width="1.0"/><path d="M55.1 145.5h28.8" stroke="#a8cafe" stroke-width="1.1"/><path d="M86.6 153.3h21.7" stroke="#c9a0f4" stroke-width="1.4"/><path d="M108.3 144.5v8.1" stroke="#c2a8f6" stroke-width="1.0"/><path d="M86.6 144.8h21.7" stroke="#a8cafe" stroke-width="1.1"/><path d="M111.4 153.7h14.1" stroke="#c9a0f4" stroke-width="1.4"/><path d="M125.5 145.0v7.9" stroke="#c2a8f6" stroke-width="1.0"/><path d="M111.4 145.3h14.1" stroke="#a8cafe" stroke-width="1.1"/><path d="M128.0 154.2h34.5" stroke="#c9a0f4" stroke-width="1.4"/><path d="M162.5 144.9v8.5" stroke="#c2a8f6" stroke-width="1.0"/><path d="M128.0 145.2h34.5" stroke="#a8cafe" stroke-width="1.1"/><path d="M164.5 153.7h31.1" stroke="#c9a0f4" stroke-width="1.4"/><path d="M195.7 144.6v8.3" stroke="#c2a8f6" stroke-width="1.0"/><path d="M164.5 144.9h31.1" stroke="#a8cafe" stroke-width="1.1"/><path d="M197.8 154.1h22.1" stroke="#c9a0f4" stroke-width="1.4"/><path d="M219.9 145.3v8.0" stroke="#c2a8f6" stroke-width="1.0"/><path d="M197.8 145.6h22.1" stroke="#a8cafe" stroke-width="1.1"/><path d="M-0.4 166.1h31.9" stroke="#c9a0f4" stroke-width="1.4"/><path d="M31.5 156.5v8.9" stroke="#c2a8f6" stroke-width="1.0"/><path d="M-0.4 156.8h31.9" stroke="#a8cafe" stroke-width="1.1"/><path d="M34.1 166.3h35.1" stroke="#c9a0f4" stroke-width="1.4"/><path d="M69.2 156.6v8.9" stroke="#c2a8f6" stroke-width="1.0"/><path d="M34.1 156.9h35.1" stroke="#a8cafe" stroke-width="1.1"/><path d="M72.1 165.2h12.4" stroke="#c9a0f4" stroke-width="1.4"/><path d="M84.5 156.0v8.4" stroke="#c2a8f6" stroke-width="1.0"/><path d="M72.1 156.3h12.4" stroke="#a8cafe" stroke-width="1.1"/><path d="M87.3 165.3h35.1" stroke="#c9a0f4" stroke-width="1.4"/><path d="M122.4 156.2v8.3" stroke="#c2a8f6" stroke-width="1.0"/><path d="M87.3 156.5h35.1" stroke="#a8cafe" stroke-width="1.1"/><path d="M125.1 165.1h18.0" stroke="#c9a0f4" stroke-width="1.4"/><path d="M143.1 155.7v8.5" stroke="#c2a8f6" stroke-width="1.0"/><path d="M125.1 156.0h18.0" stroke="#a8cafe" stroke-width="1.1"/><path d="M145.9 165.1h13.6" stroke="#c9a0f4" stroke-width="1.4"/><path d="M159.5 155.8v8.5" stroke="#c2a8f6" stroke-width="1.0"/><path d="M145.9 156.1h13.6" stroke="#a8cafe" stroke-width="1.1"/><path d="M162.2 166.2h13.4" stroke="#c9a0f4" stroke-width="1.4"/><path d="M175.5 156.3v9.1" stroke="#c2a8f6" stroke-width="1.0"/><path d="M162.2 156.6h13.4" stroke="#a8cafe" stroke-width="1.1"/><path d="M178.4 165.9h33.3" stroke="#c9a0f4" stroke-width="1.4"/><path d="M211.7 156.8v8.3" stroke="#c2a8f6" stroke-width="1.0"/><path d="M178.4 157.1h33.3" stroke="#a8cafe" stroke-width="1.1"/><path d="M-7.5 176.8h27.3" stroke="#c9a0f4" stroke-width="1.4"/><path d="M19.7 167.1v8.9" stroke="#c2a8f6" stroke-width="1.0"/><path d="M-7.5 167.4h27.3" stroke="#a8cafe" stroke-width="1.1"/><path d="M22.0 176.7h24.6" stroke="#c9a0f4" stroke-width="1.4"/><path d="M46.6 167.8v8.2" stroke="#c2a8f6" stroke-width="1.0"/><path d="M22.0 168.1h24.6" stroke="#a8cafe" stroke-width="1.1"/><path d="M49.3 176.5h13.9" stroke="#c9a0f4" stroke-width="1.4"/><path d="M63.1 167.5v8.2" stroke="#c2a8f6" stroke-width="1.0"/><path d="M49.3 167.8h13.9" stroke="#a8cafe" stroke-width="1.1"/><path d="M65.3 176.9h26.8" stroke="#c9a0f4" stroke-width="1.4"/><path d="M92.2 167.3v8.8" stroke="#c2a8f6" stroke-width="1.0"/><path d="M65.3 167.6h26.8" stroke="#a8cafe" stroke-width="1.1"/><path d="M94.7 177.2h30.0" stroke="#c9a0f4" stroke-width="1.4"/><path d="M124.7 167.4v9.0" stroke="#c2a8f6" stroke-width="1.0"/><path d="M94.7 167.7h30.0" stroke="#a8cafe" stroke-width="1.1"/><path d="M127.0 176.1h28.1" stroke="#c9a0f4" stroke-width="1.4"/><path d="M155.1 167.2v8.1" stroke="#c2a8f6" stroke-width="1.0"/><path d="M127.0 167.5h28.1" stroke="#a8cafe" stroke-width="1.1"/><path d="M158.0 176.9h23.1" stroke="#c9a0f4" stroke-width="1.4"/><path d="M181.1 167.2v8.8" stroke="#c2a8f6" stroke-width="1.0"/><path d="M158.0 167.5h23.1" stroke="#a8cafe" stroke-width="1.1"/><path d="M183.8 176.1h31.4" stroke="#c9a0f4" stroke-width="1.4"/><path d="M215.1 166.9v8.4" stroke="#c2a8f6" stroke-width="1.0"/><path d="M183.8 167.2h31.4" stroke="#a8cafe" stroke-width="1.1"/><path d="M-7.0 188.3h22.1" stroke="#c9a0f4" stroke-width="1.4"/><path d="M15.2 178.7v8.8" stroke="#c2a8f6" stroke-width="1.0"/><path d="M-7.0 179.0h22.1" stroke="#a8cafe" stroke-width="1.1"/><path d="M18.0 189.0h18.5" stroke="#c9a0f4" stroke-width="1.4"/><path d="M36.5 179.3v8.9" stroke="#c2a8f6" stroke-width="1.0"/><path d="M18.0 179.6h18.5" stroke="#a8cafe" stroke-width="1.1"/><path d="M39.0 187.2h13.7" stroke="#c9a0f4" stroke-width="1.4"/><path d="M52.7 178.3v8.0" stroke="#c2a8f6" stroke-width="1.0"/><path d="M39.0 178.6h13.7" stroke="#a8cafe" stroke-width="1.1"/><path d="M55.2 188.4h26.9" stroke="#c9a0f4" stroke-width="1.4"/><path d="M82.0 179.3v8.3" stroke="#c2a8f6" stroke-width="1.0"/><path d="M55.2 179.6h26.9" stroke="#a8cafe" stroke-width="1.1"/><path d="M84.2 187.6h25.7" stroke="#c9a0f4" stroke-width="1.4"/><path d="M109.9 178.8v8.0" stroke="#c2a8f6" stroke-width="1.0"/><path d="M84.2 179.1h25.7" stroke="#a8cafe" stroke-width="1.1"/><path d="M112.8 188.4h23.2" stroke="#c9a0f4" stroke-width="1.4"/><path d="M136.0 179.3v8.2" stroke="#c2a8f6" stroke-width="1.0"/><path d="M112.8 179.6h23.2" stroke="#a8cafe" stroke-width="1.1"/><path d="M138.4 188.8h29.7" stroke="#c9a0f4" stroke-width="1.4"/><path d="M168.1 179.3v8.7" stroke="#c2a8f6" stroke-width="1.0"/><path d="M138.4 179.6h29.7" stroke="#a8cafe" stroke-width="1.1"/><path d="M171.0 187.8h32.6" stroke="#c9a0f4" stroke-width="1.4"/><path d="M203.6 178.9v8.1" stroke="#c2a8f6" stroke-width="1.0"/><path d="M171.0 179.2h32.6" stroke="#a8cafe" stroke-width="1.1"/><path d="M206.7 187.5h15.7" stroke="#c9a0f4" stroke-width="1.4"/><path d="M222.4 178.3v8.4" stroke="#c2a8f6" stroke-width="1.0"/><path d="M206.7 178.6h15.7" stroke="#a8cafe" stroke-width="1.1"/><path d="M-8.2 198.9h18.8" stroke="#c9a0f4" stroke-width="1.4"/><path d="M10.6 190.0v8.1" stroke="#c2a8f6" stroke-width="1.0"/><path d="M-8.2 190.3h18.8" stroke="#a8cafe" stroke-width="1.1"/><path d="M12.8 199.2h16.6" stroke="#c9a0f4" stroke-width="1.4"/><path d="M29.5 190.0v8.4" stroke="#c2a8f6" stroke-width="1.0"/><path d="M12.8 190.3h16.6" stroke="#a8cafe" stroke-width="1.1"/><path d="M31.5 198.8h19.3" stroke="#c9a0f4" stroke-width="1.4"/><path d="M50.9 190.1v7.9" stroke="#c2a8f6" stroke-width="1.0"/><path d="M31.5 190.4h19.3" stroke="#a8cafe" stroke-width="1.1"/><path d="M53.7 200.0h22.2" stroke="#c9a0f4" stroke-width="1.4"/><path d="M75.9 190.2v9.0" stroke="#c2a8f6" stroke-width="1.0"/><path d="M53.7 190.5h22.2" stroke="#a8cafe" stroke-width="1.1"/><path d="M78.2 199.5h14.9" stroke="#c9a0f4" stroke-width="1.4"/><path d="M93.1 190.3v8.4" stroke="#c2a8f6" stroke-width="1.0"/><path d="M78.2 190.6h14.9" stroke="#a8cafe" stroke-width="1.1"/><path d="M95.1 199.6h34.7" stroke="#c9a0f4" stroke-width="1.4"/><path d="M129.8 189.7v9.1" stroke="#c2a8f6" stroke-width="1.0"/><path d="M95.1 190.0h34.7" stroke="#a8cafe" stroke-width="1.1"/><path d="M132.2 199.4h31.1" stroke="#c9a0f4" stroke-width="1.4"/><path d="M163.4 190.4v8.2" stroke="#c2a8f6" stroke-width="1.0"/><path d="M132.2 190.7h31.1" stroke="#a8cafe" stroke-width="1.1"/><path d="M165.9 200.4h33.9" stroke="#c9a0f4" stroke-width="1.4"/><path d="M199.8 190.7v8.9" stroke="#c2a8f6" stroke-width="1.0"/><path d="M165.9 191.0h33.9" stroke="#a8cafe" stroke-width="1.1"/><path d="M201.8 199.4h15.7" stroke="#c9a0f4" stroke-width="1.4"/><path d="M217.5 190.4v8.2" stroke="#c2a8f6" stroke-width="1.0"/><path d="M201.8 190.7h15.7" stroke="#a8cafe" stroke-width="1.1"/><path d="M-3.0 210.3h32.8" stroke="#c9a0f4" stroke-width="1.4"/><path d="M29.8 201.0v8.5" stroke="#c2a8f6" stroke-width="1.0"/><path d="M-3.0 201.3h32.8" stroke="#a8cafe" stroke-width="1.1"/><path d="M31.9 210.9h35.7" stroke="#c9a0f4" stroke-width="1.4"/><path d="M67.7 201.1v9.0" stroke="#c2a8f6" stroke-width="1.0"/><path d="M31.9 201.4h35.7" stroke="#a8cafe" stroke-width="1.1"/><path d="M70.1 210.7h33.4" stroke="#c9a0f4" stroke-width="1.4"/><path d="M103.5 201.8v8.1" stroke="#c2a8f6" stroke-width="1.0"/><path d="M70.1 202.1h33.4" stroke="#a8cafe" stroke-width="1.1"/><path d="M106.3 210.0h12.3" stroke="#c9a0f4" stroke-width="1.4"/><path d="M118.6 201.0v8.2" stroke="#c2a8f6" stroke-width="1.0"/><path d="M106.3 201.3h12.3" stroke="#a8cafe" stroke-width="1.1"/><path d="M121.7 211.5h35.3" stroke="#c9a0f4" stroke-width="1.4"/><path d="M157.0 201.7v9.0" stroke="#c2a8f6" stroke-width="1.0"/><path d="M121.7 202.0h35.3" stroke="#a8cafe" stroke-width="1.1"/><path d="M159.3 210.2h14.5" stroke="#c9a0f4" stroke-width="1.4"/><path d="M173.8 201.3v8.1" stroke="#c2a8f6" stroke-width="1.0"/><path d="M159.3 201.6h14.5" stroke="#a8cafe" stroke-width="1.1"/><path d="M176.1 211.1h25.4" stroke="#c9a0f4" stroke-width="1.4"/><path d="M201.6 201.3v9.0" stroke="#c2a8f6" stroke-width="1.0"/><path d="M176.1 201.6h25.4" stroke="#a8cafe" stroke-width="1.1"/><path d="M204.4 211.6h32.7" stroke="#c9a0f4" stroke-width="1.4"/><path d="M237.1 201.9v9.0" stroke="#c2a8f6" stroke-width="1.0"/><path d="M204.4 202.2h32.7" stroke="#a8cafe" stroke-width="1.1"/></g><path d="M0 0H12L0 12Z" fill="#7a7a7a"/><path d="M207 0H195L207 12Z" fill="#7a7a7a"/><path d="M0 207H12L0 195Z" fill="#7a7a7a"/><path d="M207 207H195L207 195Z" fill="#7a7a7a"/><path d="M12 0L0 12M195 0L207 12M0 195L12 207M207 195L195 207" stroke="#fff" stroke-width="1.2"/></svg><div class="body" style="top:261.0px;height:42.5px"></div><div class="lbl" style="left:9.5px;top:269.5px">Mapping source</div></div><div class="mi" style="left:238px;top:692px"></div><div class="dot" style="left:250px;top:972px"></div><div class="dot" style="left:245px;top:977px"></div><div class="dot" style="left:250px;top:977px"></div><div class="sk skl" style="left:32px;top:948.0px"></div><div class="sk skr on" style="left:257px;top:820.95px"></div><div class="node" style="left:442px;top:95px;width:212px;height:115.01px"><div class="hdr" style="height:48.6px;background:#108c52"></div><div class="ttl" style="left:58.5px;top:5.800000000000001px">VrayComposite</div><div class="sub" style="left:58.5px;top:26.2px">VRayCompTex</div><svg class="img" style="left:0;top:0" width="48.6" height="48.6" viewBox="0 0 48 48"><defs><filter id="bl" x="-20%" y="-20%" width="140%" height="140%"><feGaussianBlur stdDeviation="2.2"/></filter></defs><rect width="48" height="48" fill="#7b6b54"/><g filter="url(#bl)"><ellipse cx="12" cy="14" rx="6" ry="9" fill="#65553f"/><ellipse cx="26" cy="10" rx="4" ry="8" fill="#8a7b64"/><ellipse cx="38" cy="16" rx="5" ry="9" fill="#6a5a44"/><ellipse cx="24" cy="28" rx="5" ry="4" fill="#58472f"/><ellipse cx="34" cy="30" rx="3" ry="4" fill="#5a4a36"/><ellipse cx="22" cy="42" rx="10" ry="4" fill="#928570"/><ellipse cx="8" cy="34" rx="4" ry="6" fill="#6a5a46"/><ellipse cx="42" cy="40" rx="4" ry="6" fill="#85765f"/></g><path d="M0 0H6.5L0 6.5Z" fill="#555555"/><path d="M48 0H41.5L48 6.5Z" fill="#555555"/><path d="M0 48H6.5L0 41.5Z" fill="#555555"/><path d="M48 48H41.5L48 41.5Z" fill="#555555"/><path d="M6.5 0L0 6.5M41.5 0L48 6.5M0 41.5L6.5 48M48 41.5L41.5 48" stroke="#fff" stroke-width="0.9"/><rect x="0.5" y="0.5" width="47" height="47" fill="none" stroke="#f4f4f4" stroke-width="1"/></svg><div class="body" style="top:48.6px;height:66.406px"></div><div class="lbl" style="left:10px;top:57.10px">Source A</div><div class="lbl" style="left:10px;top:81.01px">Source B</div></div><div class="mi" style="left:636px;top:108px"></div><div class="dot" style="left:648px;top:200px"></div><div class="dot" style="left:643px;top:205px"></div><div class="dot" style="left:648px;top:205px"></div><div class="sk skl on" style="left:430px;top:151.6px"></div><div class="sk skl on" style="left:430px;top:175.51px"></div><div class="sk skr on" style="left:655px;top:142.7px"></div><div class="node" style="left:442px;top:254px;width:212px;height:62.10px"><div class="hdr" style="height:48.6px;background:#108c52"></div><div class="ttl" style="left:58.5px;top:5.800000000000001px">Normal</div><div class="sub" style="left:58.5px;top:26.2px">VRayNormalMap</div><svg class="img" style="left:0;top:0" width="48.6" height="48.6" viewBox="0 0 48 48"><defs><filter id="nbl" x="-50%" y="-50%" width="200%" height="200%"><feGaussianBlur stdDeviation="2.6"/></filter></defs><rect width="48" height="48" fill="#bcbafc"/><g filter="url(#nbl)"><ellipse cx="10" cy="14" rx="5" ry="9" fill="#c8b4f8"/><ellipse cx="36" cy="12" rx="6" ry="9" fill="#acbcfc"/><ellipse cx="17" cy="12" rx="3" ry="8" fill="#dcaaf4"/><ellipse cx="21" cy="28" rx="3" ry="7" fill="#f09ae8" transform="rotate(-20 21 28)"/><ellipse cx="29" cy="29" rx="3" ry="7" fill="#6eb2fa" transform="rotate(-20 29 29)"/><ellipse cx="23" cy="39" rx="5" ry="4" fill="#cef4f4"/><ellipse cx="40" cy="38" rx="5" ry="6" fill="#b0c4fc"/></g><path d="M0 0H6.5L0 6.5Z" fill="#555555"/><path d="M48 0H41.5L48 6.5Z" fill="#555555"/><path d="M0 48H6.5L0 41.5Z" fill="#555555"/><path d="M48 48H41.5L48 41.5Z" fill="#555555"/><path d="M6.5 0L0 6.5M41.5 0L48 6.5M0 41.5L6.5 48M48 41.5L41.5 48" stroke="#fff" stroke-width="0.9"/><rect x="0.5" y="0.5" width="47" height="47" fill="none" stroke="#f4f4f4" stroke-width="1"/></svg></div><div class="mi" style="left:636px;top:268px"></div><div class="mi" style="left:640.5px;top:263.5px;width:2px;height:10.5px"></div><div class="dot" style="left:648px;top:306px"></div><div class="dot" style="left:643px;top:311px"></div><div class="dot" style="left:648px;top:311px"></div><div class="sk skl on" style="left:430px;top:275.55px"></div><div class="sk skr on" style="left:655px;top:275.25px"></div><div class="node" style="left:442px;top:413.5px;width:212px;height:91.10px"><div class="hdr" style="height:48.6px;background:#108c52"></div><div class="ttl" style="left:58.5px;top:5.800000000000001px">Roughness</div><div class="sub" style="left:58.5px;top:26.2px">VRayBitmap</div><svg class="img" style="left:0;top:0" width="48.6" height="48.6" viewBox="0 0 48 48"><rect width="48" height="48" fill="#d9d9d9"/><path d="M0 0H6.5L0 6.5Z" fill="#555555"/><path d="M48 0H41.5L48 6.5Z" fill="#555555"/><path d="M0 48H6.5L0 41.5Z" fill="#555555"/><path d="M48 48H41.5L48 41.5Z" fill="#555555"/><path d="M6.5 0L0 6.5M41.5 0L48 6.5M0 41.5L6.5 48M48 41.5L41.5 48" stroke="#fff" stroke-width="0.9"/><rect x="0.5" y="0.5" width="47" height="47" fill="none" stroke="#f4f4f4" stroke-width="1"/></svg><div class="body" style="top:48.6px;height:42.5px"></div><div class="lbl" style="left:10px;top:57.10px">Mapping source</div></div><div class="mi" style="left:636px;top:426.5px"></div><div class="dot" style="left:648px;top:494px"></div><div class="dot" style="left:643px;top:499px"></div><div class="dot" style="left:648px;top:499px"></div><div class="sk skl" style="left:430px;top:470.1px"></div><div class="sk skr on" style="left:655px;top:449.25px"></div><div class="node" style="left:442px;top:626px;width:212px;height:91.10px"><div class="hdr" style="height:48.6px;background:#108c52"></div><div class="ttl" style="left:58.5px;top:5.800000000000001px">Metallic</div><div class="sub" style="left:58.5px;top:26.2px">VRayBitmap</div><svg class="img" style="left:0;top:0" width="48.6" height="48.6" viewBox="0 0 48 48"><rect width="48" height="48" fill="#151515"/><path d="M0 0H6.5L0 6.5Z" fill="#555555"/><path d="M48 0H41.5L48 6.5Z" fill="#555555"/><path d="M0 48H6.5L0 41.5Z" fill="#555555"/><path d="M48 48H41.5L48 41.5Z" fill="#555555"/><path d="M6.5 0L0 6.5M41.5 0L48 6.5M0 41.5L6.5 48M48 41.5L41.5 48" stroke="#fff" stroke-width="0.9"/><rect x="0.5" y="0.5" width="47" height="47" fill="none" stroke="#f4f4f4" stroke-width="1"/></svg><div class="body" style="top:48.6px;height:42.5px"></div><div class="lbl" style="left:10px;top:57.10px">Mapping source</div></div><div class="mi" style="left:636px;top:639px"></div><div class="dot" style="left:648px;top:707px"></div><div class="dot" style="left:643px;top:712px"></div><div class="dot" style="left:648px;top:712px"></div><div class="sk skl" style="left:430px;top:682.6px"></div><div class="sk skr on" style="left:655px;top:661.75px"></div><div class="node" style="left:787px;top:175px;width:212px;height:856.09px"><div class="hdr" style="height:48.6px;background:#4267b0"></div><div class="ttl" style="left:58.5px;top:5.800000000000001px">Poliigon_Brick...</div><div class="sub" style="left:58.5px;top:26.2px">VRayMtl</div><svg class="img" style="left:0;top:0" width="48.6" height="48.6" viewBox="0 0 48 48"><defs><linearGradient id="sbg" x1="0" y1="0" x2="0.3" y2="1"><stop offset="0" stop-color="#a9a9a9"/><stop offset="0.55" stop-color="#c6c6c6"/><stop offset="1" stop-color="#e2e2e2"/></linearGradient><radialGradient id="sph" cx="0.42" cy="0.32" r="0.72"><stop offset="0" stop-color="#736a60"/><stop offset="0.65" stop-color="#564e46"/><stop offset="1" stop-color="#3e3832"/></radialGradient><radialGradient id="shd" cx="0.5" cy="0.5" r="0.5"><stop offset="0" stop-color="#777"/><stop offset="1" stop-color="#777" stop-opacity="0"/></radialGradient><filter id="grain" x="0" y="0" width="100%" height="100%"><feTurbulence type="fractalNoise" baseFrequency="0.9" numOctaves="2" seed="3"/><feColorMatrix values="0 0 0 0 0.5  0 0 0 0 0.45  0 0 0 0 0.4  0 0 0 1.2 -0.45"/><feComposite in2="SourceGraphic" operator="in"/></filter></defs><rect width="48" height="48" fill="url(#sbg)"/><ellipse cx="31" cy="42" rx="15" ry="5" fill="url(#shd)"/><circle cx="24" cy="23.5" r="19.3" fill="url(#sph)"/><circle cx="24" cy="23.5" r="19.3" fill="#000" filter="url(#grain)" opacity="0.35"/><path d="M0 0H6.5L0 6.5Z" fill="#555555"/><path d="M48 0H41.5L48 6.5Z" fill="#555555"/><path d="M0 48H6.5L0 41.5Z" fill="#555555"/><path d="M48 48H41.5L48 41.5Z" fill="#555555"/><path d="M6.5 0L0 6.5M41.5 0L48 6.5M0 41.5L6.5 48M48 41.5L41.5 48" stroke="#fff" stroke-width="0.9"/><rect x="0.5" y="0.5" width="47" height="47" fill="none" stroke="#f4f4f4" stroke-width="1"/></svg><div class="body" style="top:48.6px;height:807.492px"></div><div class="lbl" style="left:10px;top:57.10px">Diffuse</div><div class="lbl" style="left:10px;top:81.01px">Reflection</div><div class="lbl" style="left:10px;top:104.91px">Refraction</div><div class="lbl" style="left:10px;top:128.82px">Bump</div><div class="lbl" style="left:10px;top:152.72px">Reflection roughness</div><div class="lbl" style="left:10px;top:176.63px">Refraction glossiness</div><div class="lbl" style="left:10px;top:200.54px">Displace</div><div class="lbl" style="left:10px;top:224.44px">Environment</div><div class="lbl" style="left:10px;top:248.35px">Translucent</div><div class="lbl" style="left:10px;top:272.25px">IOR</div><div class="lbl" style="left:10px;top:296.16px">Fresnel IOR</div><div class="lbl" style="left:10px;top:320.07px">Opacity</div><div class="lbl" style="left:10px;top:343.97px">Diff. rough.</div><div class="lbl" style="left:10px;top:367.88px">Anisotropy</div><div class="lbl" style="left:10px;top:391.78px">An. rotation</div><div class="lbl" style="left:10px;top:415.69px">Fog color</div><div class="lbl" style="left:10px;top:439.60px">Self-illumination</div><div class="lbl" style="left:10px;top:463.50px">GTR tail falloff</div><div class="lbl" style="left:10px;top:487.41px">Metalness</div><div class="lbl" style="left:10px;top:511.31px">Coat amount</div><div class="lbl" style="left:10px;top:535.22px">Coat roughness</div><div class="lbl" style="left:10px;top:559.13px">Coat IOR</div><div class="lbl" style="left:10px;top:583.03px">Coat color</div><div class="lbl" style="left:10px;top:606.94px">Sheen color</div><div class="lbl" style="left:10px;top:630.84px">Sheen roughness</div><div class="lbl" style="left:10px;top:654.75px">Coat bump</div><div class="lbl" style="left:10px;top:678.66px">Fog depth</div><div class="lbl" style="left:10px;top:702.56px">Translucent amount</div><div class="lbl" style="left:10px;top:726.47px">Thin Film Thickness</div><div class="lbl" style="left:10px;top:750.37px">Thin Film IOR</div><div class="lbl" style="left:10px;top:774.28px">Coat darkening</div><div class="lbl" style="left:10px;top:798.19px">Coat anisotropy</div><div class="lbl" style="left:10px;top:822.09px">Coat An. rotation</div></div><div class="mi" style="left:981px;top:188px"></div><div class="dot" style="left:994px;top:1021px"></div><div class="dot" style="left:989px;top:1026px"></div><div class="dot" style="left:994px;top:1026px"></div><div class="sk skl on" style="left:775px;top:231.6px"></div><div class="sk skl" style="left:775px;top:255.51px"></div><div class="sk skl" style="left:775px;top:279.41px"></div><div class="sk skl on" style="left:775px;top:303.32px"></div><div class="sk skl on" style="left:775px;top:327.22px"></div><div class="sk skl" style="left:775px;top:351.13px"></div><div class="sk skl" style="left:775px;top:375.04px"></div><div class="sk skl" style="left:775px;top:398.94px"></div><div class="sk skl" style="left:775px;top:422.85px"></div><div class="sk skl" style="left:775px;top:446.75px"></div><div class="sk skl" style="left:775px;top:470.66px"></div><div class="sk skl" style="left:775px;top:494.57px"></div><div class="sk skl" style="left:775px;top:518.47px"></div><div class="sk skl" style="left:775px;top:542.38px"></div><div class="sk skl" style="left:775px;top:566.28px"></div><div class="sk skl" style="left:775px;top:590.19px"></div><div class="sk skl" style="left:775px;top:614.1px"></div><div class="sk skl" style="left:775px;top:638.0px"></div><div class="sk skl on" style="left:775px;top:661.91px"></div><div class="sk skl" style="left:775px;top:685.81px"></div><div class="sk skl" style="left:775px;top:709.72px"></div><div class="sk skl" style="left:775px;top:733.63px"></div><div class="sk skl" style="left:775px;top:757.53px"></div><div class="sk skl" style="left:775px;top:781.44px"></div><div class="sk skl" style="left:775px;top:805.34px"></div><div class="sk skl" style="left:775px;top:829.25px"></div><div class="sk skl" style="left:775px;top:853.16px"></div><div class="sk skl" style="left:775px;top:877.06px"></div><div class="sk skl" style="left:775px;top:900.97px"></div><div class="sk skl" style="left:775px;top:924.87px"></div><div class="sk skl" style="left:775px;top:948.78px"></div><div class="sk skl" style="left:775px;top:972.69px"></div><div class="sk skl" style="left:775px;top:996.59px"></div><div class="sk skr" style="left:1000px;top:593.25px"></div><div class="selb" style="position:absolute;left:42.6px;top:40.8px;width:214.6px;height:306.4px;border:1.8px solid #c6c6c6;border-radius:6px 6px 3px 3px"></div><div class="br" style="left:40px;top:38px;border-top-width:1.8px;border-left-width:1.8px;border-top-left-radius:8px"></div><div class="br" style="left:242.8px;top:38px;border-top-width:1.8px;border-right-width:1.8px;border-top-right-radius:8px"></div><div class="br" style="left:40px;top:333px;border-bottom-width:1.8px;border-left-width:1.8px;border-bottom-left-radius:7px"></div><div class="br" style="left:242.8px;top:333px;border-bottom-width:1.8px;border-right-width:1.8px;border-bottom-right-radius:7px"></div></body></html>
